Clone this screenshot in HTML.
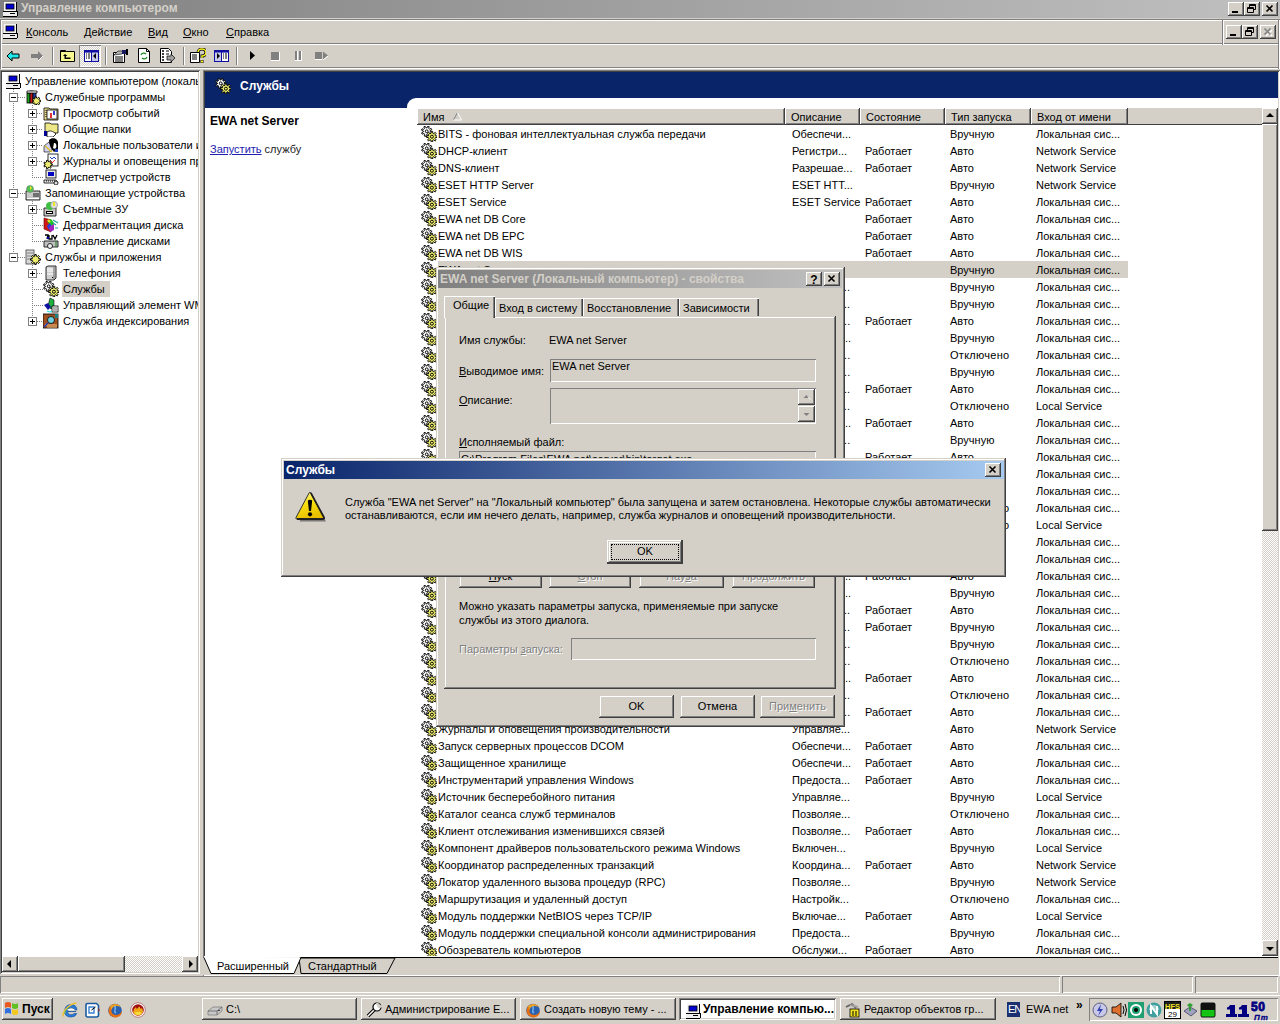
<!DOCTYPE html><html><head><meta charset="utf-8"><title>Управление компьютером</title><style>
*{margin:0;padding:0;box-sizing:border-box}
html,body{width:1280px;height:1024px;overflow:hidden;background:#d4d0c8;font-family:"Liberation Sans",sans-serif;font-size:11px;color:#000}
div,svg{position:absolute}
.t{white-space:nowrap;line-height:13px;height:13px}
.b{font-weight:bold;font-size:12px}
.raised{background:#d4d0c8;box-shadow:inset -1px -1px #404040,inset 1px 1px #fff,inset -2px -2px #808080,inset 2px 2px #d4d0c8}
.raisedo{background:#d4d0c8;box-shadow:inset -1px -1px #404040,inset 1px 1px #d4d0c8,inset -2px -2px #808080,inset 2px 2px #fff}
.sunk{box-shadow:inset 1px 1px #808080,inset -1px -1px #fff,inset 2px 2px #404040,inset -2px -2px #d4d0c8}
.etch{box-shadow:inset 1px 1px #808080,inset -1px -1px #fff}
.thin{box-shadow:inset 1px 1px #808080,inset -1px -1px #fff}
.thinr{box-shadow:inset 1px 1px #fff,inset -1px -1px #808080}
.u{text-decoration:underline}
.dis{color:#808080;text-shadow:1px 1px #fff}
.chk{background-color:#fff;background-image:linear-gradient(45deg,#d4d0c8 25%,transparent 25%,transparent 75%,#d4d0c8 75%),linear-gradient(45deg,#d4d0c8 25%,transparent 25%,transparent 75%,#d4d0c8 75%);background-size:2px 2px;background-position:0 0,1px 1px}
</style></head><body>
<div style="left:0px;top:0px;width:1280px;height:18px;background:linear-gradient(90deg,#808080,#c0c0c0)"></div>
<svg style="left:2px;top:1px" width="16" height="16" viewBox="0 0 16 16" ><rect x="2" y="1" width="12" height="9" fill="#f4f4f4"/><rect x="4" y="3" width="8" height="5" fill="#0000d0" stroke="#000" stroke-width="0.8"/><rect x="14" y="1" width="1" height="9" fill="#000"/><rect x="1" y="10" width="14" height="1" fill="#000"/><rect x="1" y="11" width="14" height="4" fill="#eee"/><rect x="1" y="15" width="14" height="1" fill="#000"/><rect x="15" y="10" width="1" height="5" fill="#000"/><rect x="8" y="12" width="5" height="1" fill="#000"/></svg>
<div class="t b" style="left:21px;top:2px;color:#d4d0c8">Управление компьютером</div>
<div class="raised" style="left:1228px;top:2px;width:16px;height:14px;"></div>
<svg style="left:1228px;top:2px" width="16" height="14" viewBox="0 0 16 14" ><rect x="4" y="9" width="6" height="2" fill="#000"/></svg>
<div class="raised" style="left:1244px;top:2px;width:16px;height:14px;"></div>
<svg style="left:1244px;top:2px" width="16" height="14" viewBox="0 0 16 14" ><path d="M5.5 2.5h6v5h-6z M5.5 3.5h6" fill="none" stroke="#000"/><path d="M3.5 5.5h6v5h-6z" fill="#d4d0c8" stroke="#000"/><path d="M3.5 6.5h6" stroke="#000"/></svg>
<div class="raised" style="left:1262px;top:2px;width:16px;height:14px;"></div>
<svg style="left:1262px;top:2px" width="16" height="14" viewBox="0 0 16 14" ><path d="M4.5 3.5l6 6M10.5 3.5l-6 6" stroke="#000" stroke-width="1.6"/></svg>
<div style="left:0px;top:19px;width:1280px;height:1px;background:#808080"></div>
<div style="left:0px;top:20px;width:1280px;height:1px;background:#fff"></div>
<div style="left:0px;top:43px;width:1280px;height:1px;background:#808080"></div>
<div style="left:0px;top:44px;width:1280px;height:1px;background:#fff"></div>
<div style="left:0px;top:67px;width:1280px;height:1px;background:#808080"></div>
<div style="left:0px;top:68px;width:1280px;height:1px;background:#fff"></div>
<div style="left:0px;top:19px;width:1px;height:50px;background:#808080"></div>
<div style="left:1px;top:20px;width:1px;height:48px;background:#fff"></div>
<div style="left:1278px;top:19px;width:1px;height:50px;background:#808080"></div>
<div style="left:1279px;top:20px;width:1px;height:48px;background:#fff"></div>
<div style="left:1222px;top:19px;width:1px;height:26px;background:#808080"></div>
<div style="left:1223px;top:20px;width:1px;height:24px;background:#fff"></div>
<svg style="left:2px;top:23px" width="16" height="16" viewBox="0 0 16 16" ><rect x="2" y="1" width="12" height="9" fill="#f4f4f4"/><rect x="4" y="3" width="8" height="5" fill="#0000d0" stroke="#000" stroke-width="0.8"/><rect x="14" y="1" width="1" height="9" fill="#000"/><rect x="1" y="10" width="14" height="1" fill="#000"/><rect x="1" y="11" width="14" height="4" fill="#eee"/><rect x="1" y="15" width="14" height="1" fill="#000"/><rect x="15" y="10" width="1" height="5" fill="#000"/><rect x="8" y="12" width="5" height="1" fill="#000"/></svg>
<div class="t" style="left:26px;top:26px;"><span class="u">К</span>онсоль</div>
<div class="t" style="left:84px;top:26px;"><span class="u">Д</span>ействие</div>
<div class="t" style="left:148px;top:26px;"><span class="u">В</span>ид</div>
<div class="t" style="left:183px;top:26px;"><span class="u">О</span>кно</div>
<div class="t" style="left:226px;top:26px;"><span class="u">С</span>правка</div>
<div class="raised" style="left:1226px;top:25px;width:16px;height:14px;"></div>
<svg style="left:1226px;top:25px" width="16" height="14" viewBox="0 0 16 14" ><rect x="4" y="9" width="6" height="2" fill="#000"/></svg>
<div class="raised" style="left:1242px;top:25px;width:16px;height:14px;"></div>
<svg style="left:1242px;top:25px" width="16" height="14" viewBox="0 0 16 14" ><path d="M5.5 2.5h6v5h-6z M5.5 3.5h6" fill="none" stroke="#000"/><path d="M3.5 5.5h6v5h-6z" fill="#d4d0c8" stroke="#000"/><path d="M3.5 6.5h6" stroke="#000"/></svg>
<div class="raised" style="left:1260px;top:25px;width:16px;height:14px;"></div>
<svg style="left:1260px;top:25px" width="16" height="14" viewBox="0 0 16 14" ><path d="M5 4l6 6M11 4l-6 6" stroke="#fff" stroke-width="1.5" transform="translate(1,1)"/><path d="M4.5 3.5l6 6M10.5 3.5l-6 6" stroke="#808080" stroke-width="1.6"/></svg>
<div class="thin chk" style="left:79px;top:45px;width:22px;height:22px;"></div>
<div style="left:52px;top:47px;width:2px;height:18px;box-shadow:inset 1px 0 #808080,inset -1px 0 #fff"></div>
<div style="left:105px;top:47px;width:2px;height:18px;box-shadow:inset 1px 0 #808080,inset -1px 0 #fff"></div>
<div style="left:183px;top:47px;width:2px;height:18px;box-shadow:inset 1px 0 #808080,inset -1px 0 #fff"></div>
<div style="left:236px;top:47px;width:2px;height:18px;box-shadow:inset 1px 0 #808080,inset -1px 0 #fff"></div>
<svg style="left:6px;top:50px" width="14" height="12" viewBox="0 0 14 12" ><path d="M1 6l5-5v3h7v4h-7v3z" fill="#20e8e8" stroke="#000" stroke-width="1"/></svg>
<svg style="left:30px;top:50px" width="14" height="12" viewBox="0 0 14 12" ><path d="M13 6l-5-5v3h-7v4h7v3z" fill="#808080"/><path d="M8 11l5-5" stroke="#fff"/></svg>
<svg style="left:60px;top:48px" width="16" height="16" viewBox="0 0 16 16" ><path d="M0.5 2.5h5l1 1h8v10h-14z" fill="#f8f890" stroke="#000" stroke-width="1"/><path d="M0.5 3.5h6" stroke="#000"/><path d="M5 6l-2 2h1.5v3h6v-1.5h-4.5v-1.5h1.5z" fill="#000"/></svg>
<svg style="left:84px;top:50px" width="15" height="12" viewBox="0 0 15 12" ><rect x="0.5" y="0.5" width="14" height="11" fill="#c8c8e8" stroke="#1010a0" stroke-width="1"/><rect x="1" y="1" width="13" height="1.5" fill="#1010a0"/><rect x="7" y="1" width="1" height="10" fill="#1010a0"/><rect x="1" y="3" width="6" height="8" fill="#fff"/><path d="M2 4h1M2 6h1M2 8h1M4 4h2M4 6h2M4 8h2" stroke="#000"/><path d="M12 3v6l-3-3z" fill="#000"/></svg>
<svg style="left:113px;top:48px" width="16" height="16" viewBox="0 0 16 16" ><path d="M0.5 4.5h11v10h-11z" fill="#fff" stroke="#000"/><path d="M2 9h8M2 11h8M2 13h8" stroke="#000"/><path d="M1 7l4-4h6l-2 3z" fill="#b0b0b0" stroke="#000" stroke-width=".6"/><path d="M9 2h5v4h-5z" fill="#1a1a60"/><rect x="13" y="1" width="2" height="6" fill="#000"/></svg>
<svg style="left:138px;top:48px" width="12" height="16" viewBox="0 0 12 16" ><path d="M0.5 0.5h8l3 3v11h-11z" fill="#fff" stroke="#000"/><path d="M8.5 0.5v3h3" fill="none" stroke="#000"/><path d="M3 7a3 3 0 0 1 5-1M9 9a3 3 0 0 1-5 1" stroke="#209020" stroke-width="1.2" fill="none"/></svg>
<svg style="left:160px;top:48px" width="16" height="16" viewBox="0 0 16 16" ><path d="M0.5 0.5h8l3 3v11h-11z" fill="#fff" stroke="#000"/><path d="M2 3h2M2 6h2M2 9h2M2 12h2" stroke="#000" stroke-width="1.5"/><path d="M6 3h3M6 6h3" stroke="#000"/><path d="M7 8h4v-2l4 4-4 4v-2h-4z" fill="#a0a0a0" stroke="#000" stroke-width=".7"/></svg>
<svg style="left:190px;top:48px" width="16" height="16" viewBox="0 0 16 16" ><path d="M0.5 4.5h9v10h-9z" fill="#fff" stroke="#000"/><path d="M2 7h5M2 9h5M2 11h5" stroke="#000"/><path d="M8 4a4 3.5 0 1 1 4 4v2" fill="none" stroke="#000" stroke-width="3"/><path d="M8 4a4 3.5 0 1 1 4 4v2" fill="none" stroke="#f8f820" stroke-width="1.5"/><rect x="10.5" y="12" width="3" height="3" fill="#000"/><rect x="11" y="12.5" width="2" height="2" fill="#f8f820"/></svg>
<svg style="left:214px;top:50px" width="15" height="12" viewBox="0 0 15 12" ><rect x="0.5" y="0.5" width="14" height="11" fill="#c8c8e8" stroke="#1010a0" stroke-width="1"/><rect x="1" y="1" width="13" height="1.5" fill="#1010a0"/><rect x="7" y="1" width="1" height="10" fill="#1010a0"/><rect x="8" y="3" width="6" height="8" fill="#fff"/><path d="M9 4h1M9 6h1M9 8h1M11 4h2M11 6h2M11 8h2" stroke="#000"/><path d="M3 3v6l3-3z" fill="#000"/></svg>
<svg style="left:249px;top:50px" width="8" height="12" viewBox="0 0 8 12" ><path d="M1 1v9l5-4.5z" fill="#000"/></svg>
<svg style="left:270px;top:51px" width="11" height="11" viewBox="0 0 11 11" ><rect x="1" y="1" width="8" height="8" fill="#808080"/><path d="M9.5 1v8.5h-8.5" stroke="#fff" fill="none"/></svg>
<svg style="left:294px;top:50px" width="9" height="12" viewBox="0 0 9 12" ><rect x="1" y="1" width="2" height="9" fill="#808080"/><rect x="5" y="1" width="2" height="9" fill="#808080"/><path d="M3.5 1v9.5M7.5 1v9.5h-6.5" stroke="#fff" fill="none"/></svg>
<svg style="left:314px;top:50px" width="16" height="12" viewBox="0 0 16 12" ><rect x="1" y="2" width="7" height="7" fill="#808080"/><path d="M9 1.5l5 4-5 4z" fill="#808080"/><path d="M8 9.5h-7M9 10l5-4" stroke="#fff" fill="none"/></svg>
<div class="sunk" style="left:0px;top:70px;width:200px;height:904px;background:#fff"></div>
<div style="left:2px;top:72px;width:196px;height:884px;overflow:hidden">
<div style="left:11px;top:17px;width:1px;height:168px;background:repeating-linear-gradient(180deg,#808080 0 1px,transparent 1px 2px)"></div>
<div style="left:30px;top:33px;width:1px;height:72px;background:repeating-linear-gradient(180deg,#808080 0 1px,transparent 1px 2px)"></div>
<div style="left:30px;top:129px;width:1px;height:40px;background:repeating-linear-gradient(180deg,#808080 0 1px,transparent 1px 2px)"></div>
<div style="left:30px;top:193px;width:1px;height:56px;background:repeating-linear-gradient(180deg,#808080 0 1px,transparent 1px 2px)"></div>
<div style="left:16px;top:25px;width:7px;height:1px;background:repeating-linear-gradient(90deg,#808080 0 1px,transparent 1px 2px)"></div>
<div style="left:35px;top:41px;width:6px;height:1px;background:repeating-linear-gradient(90deg,#808080 0 1px,transparent 1px 2px)"></div>
<div style="left:35px;top:57px;width:6px;height:1px;background:repeating-linear-gradient(90deg,#808080 0 1px,transparent 1px 2px)"></div>
<div style="left:35px;top:73px;width:6px;height:1px;background:repeating-linear-gradient(90deg,#808080 0 1px,transparent 1px 2px)"></div>
<div style="left:35px;top:89px;width:6px;height:1px;background:repeating-linear-gradient(90deg,#808080 0 1px,transparent 1px 2px)"></div>
<div style="left:30px;top:105px;width:11px;height:1px;background:repeating-linear-gradient(90deg,#808080 0 1px,transparent 1px 2px)"></div>
<div style="left:16px;top:121px;width:7px;height:1px;background:repeating-linear-gradient(90deg,#808080 0 1px,transparent 1px 2px)"></div>
<div style="left:35px;top:137px;width:6px;height:1px;background:repeating-linear-gradient(90deg,#808080 0 1px,transparent 1px 2px)"></div>
<div style="left:30px;top:153px;width:11px;height:1px;background:repeating-linear-gradient(90deg,#808080 0 1px,transparent 1px 2px)"></div>
<div style="left:30px;top:169px;width:11px;height:1px;background:repeating-linear-gradient(90deg,#808080 0 1px,transparent 1px 2px)"></div>
<div style="left:16px;top:185px;width:7px;height:1px;background:repeating-linear-gradient(90deg,#808080 0 1px,transparent 1px 2px)"></div>
<div style="left:35px;top:201px;width:6px;height:1px;background:repeating-linear-gradient(90deg,#808080 0 1px,transparent 1px 2px)"></div>
<div style="left:30px;top:217px;width:11px;height:1px;background:repeating-linear-gradient(90deg,#808080 0 1px,transparent 1px 2px)"></div>
<div style="left:30px;top:233px;width:11px;height:1px;background:repeating-linear-gradient(90deg,#808080 0 1px,transparent 1px 2px)"></div>
<div style="left:35px;top:249px;width:6px;height:1px;background:repeating-linear-gradient(90deg,#808080 0 1px,transparent 1px 2px)"></div>
<svg style="left:3px;top:1px" width="16" height="16" viewBox="0 0 16 16" ><rect x="2" y="1" width="12" height="9" fill="#f4f4f4"/><rect x="4" y="3" width="8" height="5" fill="#0000d0" stroke="#000" stroke-width="0.8"/><rect x="14" y="1" width="1" height="9" fill="#000"/><rect x="1" y="10" width="14" height="1" fill="#000"/><rect x="1" y="11" width="14" height="4" fill="#eee"/><rect x="1" y="15" width="14" height="1" fill="#000"/><rect x="15" y="10" width="1" height="5" fill="#000"/><rect x="8" y="12" width="5" height="1" fill="#000"/></svg>
<div class="t" style="left:23px;top:3px;">Управление компьютером (локальным)</div>
<svg style="left:23px;top:17px" width="16" height="16" viewBox="0 0 16 16" ><rect x="2" y="4" width="3" height="10" fill="#20a020" stroke="#000" stroke-width=".8"/><rect x="5" y="2" width="3" height="12" fill="#c01818" stroke="#000" stroke-width=".8"/><rect x="8" y="3" width="3" height="8" fill="#2040a0" stroke="#000" stroke-width=".8"/><path d="M2 2h10v2h-10z" fill="#fff" stroke="#000" stroke-width=".8"/><path d="M14.39 11.20 L15.74 11.31 L15.74 12.69 L14.39 12.80 L13.93 13.76 L14.69 14.89 L13.61 15.75 L12.68 14.76 L11.63 15.00 L11.23 16.29 L9.88 15.98 L10.08 14.64 L9.24 13.97 L7.98 14.46 L7.38 13.22 L8.55 12.54 L8.55 11.46 L7.38 10.78 L7.98 9.54 L9.24 10.03 L10.08 9.36 L9.88 8.02 L11.23 7.71 L11.63 9.00 L12.68 9.24 L13.61 8.25 L14.69 9.11 L13.93 10.24Z" fill="#ecec70" stroke="#000" stroke-width="1"/></svg>
<div class="t" style="left:43px;top:19px;">Служебные программы</div>
<div style="left:7px;top:21px;width:9px;height:9px;background:#fff;border:1px solid #808080"></div>
<div style="left:9px;top:25px;width:5px;height:1px;background:#000"></div>
<svg style="left:41px;top:33px" width="16" height="16" viewBox="0 0 16 16" ><path d="M1 3h5l1 1h8v11h-14z" fill="#f0e090" stroke="#000" stroke-width=".8"/><rect x="4" y="5" width="10" height="9" fill="#fff" stroke="#000" stroke-width=".8"/><rect x="7" y="8" width="2" height="5" fill="#e03030"/><rect x="10" y="6" width="2" height="4" fill="#3040c0"/><path d="M3 5v8" stroke="#000" stroke-dasharray="1 1"/></svg>
<div class="t" style="left:61px;top:35px;">Просмотр событий</div>
<div style="left:26px;top:37px;width:9px;height:9px;background:#fff;border:1px solid #808080"></div>
<div style="left:28px;top:41px;width:5px;height:1px;background:#000"></div>
<div style="left:30px;top:39px;width:1px;height:5px;background:#000"></div>
<svg style="left:41px;top:49px" width="16" height="16" viewBox="0 0 16 16" ><path d="M2 2h5l1 1h7v9h-13z" fill="#ece888" stroke="#000" stroke-width=".8"/><rect x="1" y="10" width="3" height="5" fill="#0000a0"/><path d="M4 11c3-2 6-1 9 2l-3 3h-6z" fill="#fff" stroke="#000" stroke-width=".8"/></svg>
<div class="t" style="left:61px;top:51px;">Общие папки</div>
<div style="left:26px;top:53px;width:9px;height:9px;background:#fff;border:1px solid #808080"></div>
<div style="left:28px;top:57px;width:5px;height:1px;background:#000"></div>
<div style="left:30px;top:55px;width:1px;height:5px;background:#000"></div>
<svg style="left:41px;top:65px" width="16" height="16" viewBox="0 0 16 16" ><path d="M1 15v-6l5-4 4 6-3 4z" fill="#d0d0f0" stroke="#000" stroke-width=".6"/><path d="M6 3c3-3 9-2 9 3v6l-4 3c-3-3-5-7-5-12z" fill="#000"/><path d="M11 6c2 0 3 2 2 5-1 1-2 1-3 0z" fill="#fff"/><path d="M2 9l7 6" stroke="#e0c020" stroke-width="1.5"/><rect x="12" y="12" width="3" height="3" fill="#2040c0"/></svg>
<div class="t" style="left:61px;top:67px;">Локальные пользователи и группы</div>
<div style="left:26px;top:69px;width:9px;height:9px;background:#fff;border:1px solid #808080"></div>
<div style="left:28px;top:73px;width:5px;height:1px;background:#000"></div>
<div style="left:30px;top:71px;width:1px;height:5px;background:#000"></div>
<svg style="left:41px;top:81px" width="16" height="16" viewBox="0 0 16 16" ><rect x="5" y="1" width="10" height="12" fill="#fff" stroke="#000" stroke-width=".8"/><path d="M7 4l2 2 2-2 2 2" stroke="#2040c0" fill="none"/><path d="M7 7l2 3 3-3" stroke="#e03030" fill="none"/><path d="M7.89 10.70 L9.24 10.81 L9.24 12.19 L7.89 12.30 L7.43 13.26 L8.19 14.39 L7.11 15.25 L6.18 14.26 L5.13 14.50 L4.73 15.79 L3.38 15.48 L3.58 14.14 L2.74 13.47 L1.48 13.96 L0.88 12.72 L2.05 12.04 L2.05 10.96 L0.88 10.28 L1.48 9.04 L2.74 9.53 L3.58 8.86 L3.38 7.52 L4.73 7.21 L5.13 8.50 L6.18 8.74 L7.11 7.75 L8.19 8.61 L7.43 9.74Z" fill="#ecec70" stroke="#000" stroke-width="1"/></svg>
<div class="t" style="left:61px;top:83px;">Журналы и оповещения производительности</div>
<div style="left:26px;top:85px;width:9px;height:9px;background:#fff;border:1px solid #808080"></div>
<div style="left:28px;top:89px;width:5px;height:1px;background:#000"></div>
<div style="left:30px;top:87px;width:1px;height:5px;background:#000"></div>
<svg style="left:41px;top:97px" width="16" height="16" viewBox="0 0 16 16" ><rect x="3" y="1" width="10" height="8" fill="#e8e8e8" stroke="#000" stroke-width=".8"/><rect x="5" y="3" width="6" height="4" fill="#0000c0"/><path d="M1 11h12l2 3h-14z" fill="#e8e8e8" stroke="#000" stroke-width=".8"/><path d="M3 12h9" stroke="#000" stroke-dasharray="1 1"/><circle cx="13" cy="14" r="2" fill="#ddd" stroke="#000" stroke-width=".8"/></svg>
<div class="t" style="left:61px;top:99px;">Диспетчер устройств</div>
<svg style="left:23px;top:113px" width="16" height="16" viewBox="0 0 16 16" ><path d="M1 6h14v9h-14z" fill="#c8c8c8" stroke="#000" stroke-width=".8"/><rect x="8" y="8" width="6" height="4" fill="#707070"/><rect x="2" y="13" width="12" height="1" fill="#fff"/><circle cx="5" cy="4" r="3.5" fill="#50c050" stroke="#808080" stroke-width=".6"/><path d="M5 1l2 2-2 2z" fill="#f0f020"/></svg>
<div class="t" style="left:43px;top:115px;">Запоминающие устройства</div>
<div style="left:7px;top:117px;width:9px;height:9px;background:#fff;border:1px solid #808080"></div>
<div style="left:9px;top:121px;width:5px;height:1px;background:#000"></div>
<svg style="left:41px;top:129px" width="16" height="16" viewBox="0 0 16 16" ><path d="M1 7h12v8h-12z" fill="#c8c8c8" stroke="#000" stroke-width=".8"/><rect x="3" y="10" width="7" height="3" fill="#000"/><rect x="4" y="11" width="5" height="1" fill="#fff"/><circle cx="7" cy="5" r="4" fill="#40c040"/><circle cx="11" cy="4" r="3.5" fill="#e0e0e0" stroke="#808080" stroke-width=".6"/><path d="M10 1h2v4h-2z" fill="#e8e820"/></svg>
<div class="t" style="left:61px;top:131px;">Съемные ЗУ</div>
<div style="left:26px;top:133px;width:9px;height:9px;background:#fff;border:1px solid #808080"></div>
<div style="left:28px;top:137px;width:5px;height:1px;background:#000"></div>
<div style="left:30px;top:135px;width:1px;height:5px;background:#000"></div>
<svg style="left:41px;top:145px" width="16" height="16" viewBox="0 0 16 16" ><path d="M1 1l7 2v12l-7-3z" fill="#d01818" stroke="#600" stroke-width=".6"/><path d="M4 4l4-2 3 4-2 5z" fill="#20c020"/><path d="M4 9l3-3 2 4-3 3z" fill="#2040e0"/><path d="M6 10l5-3v6l-4 2z" fill="#a020c0"/><path d="M10 3l5 3M10 6l3 2M12 11h3" stroke="#20a0a0" stroke-width="1.2"/><path d="M5 3l2 2" stroke="#f0e020" stroke-width="2"/></svg>
<div class="t" style="left:61px;top:147px;">Дефрагментация диска</div>
<svg style="left:41px;top:161px" width="16" height="16" viewBox="0 0 16 16" ><path d="M1 8h14v6h-14z" fill="#c0c0c0" stroke="#000" stroke-width=".8"/><path d="M2 2h3l-1 4M6 2v4h3v-4M10 2l2 4 2-4" stroke="#000" stroke-width="1.3" fill="none"/><path d="M4 5h2" stroke="#0000a0" stroke-width="2"/><circle cx="7" cy="13" r="2.5" fill="#eee" stroke="#000" stroke-width=".8"/><path d="M13 8v6" stroke="#208020"/></svg>
<div class="t" style="left:61px;top:163px;">Управление дисками</div>
<svg style="left:23px;top:177px" width="16" height="16" viewBox="0 0 16 16" ><rect x="1" y="1" width="8" height="14" fill="#d8d8d8" stroke="#404040" stroke-width=".8"/><path d="M2 4h6M2 7h6M2 10h6" stroke="#808080"/><path d="M13.81 9.71 L15.45 9.80 L15.45 11.20 L13.81 11.29 L13.40 12.28 L14.50 13.50 L13.50 14.50 L12.28 13.40 L11.29 13.81 L11.20 15.45 L9.80 15.45 L9.71 13.81 L8.72 13.40 L7.50 14.50 L6.50 13.50 L7.60 12.28 L7.19 11.29 L5.55 11.20 L5.55 9.80 L7.19 9.71 L7.60 8.72 L6.50 7.50 L7.50 6.50 L8.72 7.60 L9.71 7.19 L9.80 5.55 L11.20 5.55 L11.29 7.19 L12.28 7.60 L13.50 6.50 L14.50 7.50 L13.40 8.72Z" fill="#ecec70" stroke="#000" stroke-width="1"/></svg>
<div class="t" style="left:43px;top:179px;">Службы и приложения</div>
<div style="left:7px;top:181px;width:9px;height:9px;background:#fff;border:1px solid #808080"></div>
<div style="left:9px;top:185px;width:5px;height:1px;background:#000"></div>
<svg style="left:41px;top:193px" width="16" height="16" viewBox="0 0 16 16" ><path d="M3 2l2-1h8v12l-2 2h-8z" fill="#d0d0d0" stroke="#000" stroke-width=".8"/><path d="M4 4h8M4 6h8M4 9h8" stroke="#fff" stroke-width="1"/><path d="M11 2v12" stroke="#606060"/><rect x="9" y="12" width="1" height="1" fill="#000"/></svg>
<div class="t" style="left:61px;top:195px;">Телефония</div>
<div style="left:26px;top:197px;width:9px;height:9px;background:#fff;border:1px solid #808080"></div>
<div style="left:28px;top:201px;width:5px;height:1px;background:#000"></div>
<div style="left:30px;top:199px;width:1px;height:5px;background:#000"></div>
<div style="left:60px;top:209px;width:48px;height:16px;background:#d4d0c8"></div>
<svg style="left:41px;top:209px" width="16" height="16" viewBox="0 0 16 16" ><path d="M9.18 5.70 L10.89 6.40 L10.37 7.80 L8.62 7.23 L7.88 8.04 L8.59 9.74 L7.24 10.37 L6.39 8.73 L5.30 8.78 L4.60 10.49 L3.20 9.97 L3.77 8.22 L2.96 7.48 L1.26 8.19 L0.63 6.84 L2.27 5.99 L2.22 4.90 L0.51 4.20 L1.03 2.80 L2.78 3.37 L3.52 2.56 L2.81 0.86 L4.16 0.23 L5.01 1.87 L6.10 1.82 L6.80 0.11 L8.20 0.63 L7.63 2.38 L8.44 3.12 L10.14 2.41 L10.77 3.76 L9.13 4.61Z" fill="#fff" stroke="#000" stroke-width="0.95" stroke-linejoin="round"/><circle cx="5.7" cy="5.3" r="1.4" fill="#fff" stroke="#000" stroke-width="1"/><path d="M14.40 9.86 L16.25 9.94 L16.25 11.46 L14.40 11.54 L13.97 12.58 L15.22 13.94 L14.14 15.02 L12.78 13.77 L11.74 14.20 L11.66 16.05 L10.14 16.05 L10.06 14.20 L9.02 13.77 L7.66 15.02 L6.58 13.94 L7.83 12.58 L7.40 11.54 L5.55 11.46 L5.55 9.94 L7.40 9.86 L7.83 8.82 L6.58 7.46 L7.66 6.38 L9.02 7.63 L10.06 7.20 L10.14 5.35 L11.66 5.35 L11.74 7.20 L12.78 7.63 L14.14 6.38 L15.22 7.46 L13.97 8.82Z" fill="#f0f070" stroke="#000" stroke-width="0.95" stroke-linejoin="round"/><circle cx="10.9" cy="10.7" r="1.5" fill="#f0f070" stroke="#000" stroke-width="1"/></svg>
<div class="t" style="left:61px;top:211px;">Службы</div>
<svg style="left:41px;top:225px" width="16" height="16" viewBox="0 0 16 16" ><path d="M7 1l4 2v7l-3 2-3-3z" fill="#20b040" stroke="#000" stroke-width=".6"/><path d="M1 8l4-2 3 4-3 3z" fill="#1010a0"/><rect x="9" y="9" width="6" height="6" fill="#fff" stroke="#000" stroke-width=".8"/><path d="M10 11h4M10 13h4" stroke="#000" stroke-width=".6"/><path d="M4 14c2 1 4 1 5 0" stroke="#40e0e0" stroke-width="1.2" fill="none"/></svg>
<div class="t" style="left:61px;top:227px;">Управляющий элемент WMI</div>
<svg style="left:41px;top:241px" width="16" height="16" viewBox="0 0 16 16" ><rect x="0" y="1" width="15" height="14" fill="#a05020" stroke="#000" stroke-width=".8"/><rect x="12" y="1" width="3" height="4" fill="#208080"/><path d="M2 12h12M4 14h10" stroke="#f0c080" stroke-width="1"/><circle cx="8" cy="7" r="3.5" fill="#70d0e0" stroke="#000" stroke-width=".8"/><path d="M5 10l-4 4" stroke="#2040c0" stroke-width="1.5"/></svg>
<div class="t" style="left:61px;top:243px;">Служба индексирования</div>
<div style="left:26px;top:245px;width:9px;height:9px;background:#fff;border:1px solid #808080"></div>
<div style="left:28px;top:249px;width:5px;height:1px;background:#000"></div>
<div style="left:30px;top:247px;width:1px;height:5px;background:#000"></div>
</div>
<div class="chk" style="left:2px;top:956px;width:196px;height:16px;"></div>
<div class="raised" style="left:2px;top:956px;width:16px;height:16px;"></div>
<svg style="left:2px;top:956px" width="16" height="16" viewBox="0 0 16 16" ><path d="M5 8l4-4v8z" fill="#000"/></svg>
<div class="raised" style="left:18px;top:956px;width:107px;height:16px;"></div>
<div class="raised" style="left:182px;top:956px;width:16px;height:16px;"></div>
<svg style="left:182px;top:956px" width="16" height="16" viewBox="0 0 16 16" ><path d="M11 8l-4-4v8z" fill="#000"/></svg>
<div class="sunk" style="left:203px;top:70px;width:1077px;height:906px;background:#fff"></div>
<div style="left:205px;top:72px;width:1073px;height:36px;background:#0a246a"></div>
<svg style="left:215px;top:78px" width="16" height="16" viewBox="0 0 16 16" ><path d="M9.18 5.70 L10.89 6.40 L10.37 7.80 L8.62 7.23 L7.88 8.04 L8.59 9.74 L7.24 10.37 L6.39 8.73 L5.30 8.78 L4.60 10.49 L3.20 9.97 L3.77 8.22 L2.96 7.48 L1.26 8.19 L0.63 6.84 L2.27 5.99 L2.22 4.90 L0.51 4.20 L1.03 2.80 L2.78 3.37 L3.52 2.56 L2.81 0.86 L4.16 0.23 L5.01 1.87 L6.10 1.82 L6.80 0.11 L8.20 0.63 L7.63 2.38 L8.44 3.12 L10.14 2.41 L10.77 3.76 L9.13 4.61Z" fill="#fff" stroke="#000" stroke-width="0.95" stroke-linejoin="round"/><circle cx="5.7" cy="5.3" r="1.4" fill="#fff" stroke="#000" stroke-width="1"/><path d="M14.40 9.86 L16.25 9.94 L16.25 11.46 L14.40 11.54 L13.97 12.58 L15.22 13.94 L14.14 15.02 L12.78 13.77 L11.74 14.20 L11.66 16.05 L10.14 16.05 L10.06 14.20 L9.02 13.77 L7.66 15.02 L6.58 13.94 L7.83 12.58 L7.40 11.54 L5.55 11.46 L5.55 9.94 L7.40 9.86 L7.83 8.82 L6.58 7.46 L7.66 6.38 L9.02 7.63 L10.06 7.20 L10.14 5.35 L11.66 5.35 L11.74 7.20 L12.78 7.63 L14.14 6.38 L15.22 7.46 L13.97 8.82Z" fill="#f0f070" stroke="#000" stroke-width="0.95" stroke-linejoin="round"/><circle cx="10.9" cy="10.7" r="1.5" fill="#f0f070" stroke="#000" stroke-width="1"/></svg>
<div class="t b" style="left:240px;top:80px;color:#fff">Службы</div>
<div style="left:407px;top:98px;width:871px;height:10px;background:#fff;border-top-left-radius:9px"></div>
<div class="t b" style="left:210px;top:115px;">EWA net Server</div>
<div class="t" style="left:210px;top:143px;"><span class="u" style="color:#2020b0">Запустить</span> <span style="color:#222">службу</span></div>
<div style="left:417px;top:108px;width:845px;height:17px;background:#d4d0c8;box-shadow:inset 0 -1px #404040"></div>
<div class="raised" style="left:417px;top:108px;width:368px;height:17px;"></div>
<div class="t" style="left:423px;top:111px;">Имя</div>
<div class="raised" style="left:785px;top:108px;width:75px;height:17px;"></div>
<div class="t" style="left:791px;top:111px;">Описание</div>
<div class="raised" style="left:860px;top:108px;width:85px;height:17px;"></div>
<div class="t" style="left:866px;top:111px;">Состояние</div>
<div class="raised" style="left:945px;top:108px;width:86px;height:17px;"></div>
<div class="t" style="left:951px;top:111px;">Тип запуска</div>
<div class="raised" style="left:1031px;top:108px;width:97px;height:17px;"></div>
<div class="t" style="left:1037px;top:111px;">Вход от имени</div>
<svg style="left:453px;top:112px" width="10" height="10" viewBox="0 0 10 10" ><path d="M4.5 0.5L0.5 8" stroke="#808080"/><path d="M4.5 0.5L8.5 8H0.5" stroke="#fff" fill="none"/></svg>
<div style="left:417px;top:125px;width:845px;height:832px;overflow:hidden">
<svg style="left:4px;top:1px" width="16" height="16" viewBox="0 0 16 16" ><path d="M9.18 5.70 L10.89 6.40 L10.37 7.80 L8.62 7.23 L7.88 8.04 L8.59 9.74 L7.24 10.37 L6.39 8.73 L5.30 8.78 L4.60 10.49 L3.20 9.97 L3.77 8.22 L2.96 7.48 L1.26 8.19 L0.63 6.84 L2.27 5.99 L2.22 4.90 L0.51 4.20 L1.03 2.80 L2.78 3.37 L3.52 2.56 L2.81 0.86 L4.16 0.23 L5.01 1.87 L6.10 1.82 L6.80 0.11 L8.20 0.63 L7.63 2.38 L8.44 3.12 L10.14 2.41 L10.77 3.76 L9.13 4.61Z" fill="#fff" stroke="#000" stroke-width="0.95" stroke-linejoin="round"/><circle cx="5.7" cy="5.3" r="1.4" fill="#fff" stroke="#000" stroke-width="1"/><path d="M14.40 9.86 L16.25 9.94 L16.25 11.46 L14.40 11.54 L13.97 12.58 L15.22 13.94 L14.14 15.02 L12.78 13.77 L11.74 14.20 L11.66 16.05 L10.14 16.05 L10.06 14.20 L9.02 13.77 L7.66 15.02 L6.58 13.94 L7.83 12.58 L7.40 11.54 L5.55 11.46 L5.55 9.94 L7.40 9.86 L7.83 8.82 L6.58 7.46 L7.66 6.38 L9.02 7.63 L10.06 7.20 L10.14 5.35 L11.66 5.35 L11.74 7.20 L12.78 7.63 L14.14 6.38 L15.22 7.46 L13.97 8.82Z" fill="#f0f070" stroke="#000" stroke-width="0.95" stroke-linejoin="round"/><circle cx="10.9" cy="10.7" r="1.5" fill="#f0f070" stroke="#000" stroke-width="1"/></svg>
<div class="t" style="left:21px;top:3px;">BITS - фоновая интеллектуальная служба передачи</div>
<div class="t" style="left:375px;top:3px;">Обеспечи...</div>
<div class="t" style="left:448px;top:3px;"></div>
<div class="t" style="left:533px;top:3px;">Вручную</div>
<div class="t" style="left:619px;top:3px;">Локальная сис...</div>
<svg style="left:4px;top:18px" width="16" height="16" viewBox="0 0 16 16" ><path d="M9.18 5.70 L10.89 6.40 L10.37 7.80 L8.62 7.23 L7.88 8.04 L8.59 9.74 L7.24 10.37 L6.39 8.73 L5.30 8.78 L4.60 10.49 L3.20 9.97 L3.77 8.22 L2.96 7.48 L1.26 8.19 L0.63 6.84 L2.27 5.99 L2.22 4.90 L0.51 4.20 L1.03 2.80 L2.78 3.37 L3.52 2.56 L2.81 0.86 L4.16 0.23 L5.01 1.87 L6.10 1.82 L6.80 0.11 L8.20 0.63 L7.63 2.38 L8.44 3.12 L10.14 2.41 L10.77 3.76 L9.13 4.61Z" fill="#fff" stroke="#000" stroke-width="0.95" stroke-linejoin="round"/><circle cx="5.7" cy="5.3" r="1.4" fill="#fff" stroke="#000" stroke-width="1"/><path d="M14.40 9.86 L16.25 9.94 L16.25 11.46 L14.40 11.54 L13.97 12.58 L15.22 13.94 L14.14 15.02 L12.78 13.77 L11.74 14.20 L11.66 16.05 L10.14 16.05 L10.06 14.20 L9.02 13.77 L7.66 15.02 L6.58 13.94 L7.83 12.58 L7.40 11.54 L5.55 11.46 L5.55 9.94 L7.40 9.86 L7.83 8.82 L6.58 7.46 L7.66 6.38 L9.02 7.63 L10.06 7.20 L10.14 5.35 L11.66 5.35 L11.74 7.20 L12.78 7.63 L14.14 6.38 L15.22 7.46 L13.97 8.82Z" fill="#f0f070" stroke="#000" stroke-width="0.95" stroke-linejoin="round"/><circle cx="10.9" cy="10.7" r="1.5" fill="#f0f070" stroke="#000" stroke-width="1"/></svg>
<div class="t" style="left:21px;top:20px;">DHCP-клиент</div>
<div class="t" style="left:375px;top:20px;">Регистри...</div>
<div class="t" style="left:448px;top:20px;">Работает</div>
<div class="t" style="left:533px;top:20px;">Авто</div>
<div class="t" style="left:619px;top:20px;">Network Service</div>
<svg style="left:4px;top:35px" width="16" height="16" viewBox="0 0 16 16" ><path d="M9.18 5.70 L10.89 6.40 L10.37 7.80 L8.62 7.23 L7.88 8.04 L8.59 9.74 L7.24 10.37 L6.39 8.73 L5.30 8.78 L4.60 10.49 L3.20 9.97 L3.77 8.22 L2.96 7.48 L1.26 8.19 L0.63 6.84 L2.27 5.99 L2.22 4.90 L0.51 4.20 L1.03 2.80 L2.78 3.37 L3.52 2.56 L2.81 0.86 L4.16 0.23 L5.01 1.87 L6.10 1.82 L6.80 0.11 L8.20 0.63 L7.63 2.38 L8.44 3.12 L10.14 2.41 L10.77 3.76 L9.13 4.61Z" fill="#fff" stroke="#000" stroke-width="0.95" stroke-linejoin="round"/><circle cx="5.7" cy="5.3" r="1.4" fill="#fff" stroke="#000" stroke-width="1"/><path d="M14.40 9.86 L16.25 9.94 L16.25 11.46 L14.40 11.54 L13.97 12.58 L15.22 13.94 L14.14 15.02 L12.78 13.77 L11.74 14.20 L11.66 16.05 L10.14 16.05 L10.06 14.20 L9.02 13.77 L7.66 15.02 L6.58 13.94 L7.83 12.58 L7.40 11.54 L5.55 11.46 L5.55 9.94 L7.40 9.86 L7.83 8.82 L6.58 7.46 L7.66 6.38 L9.02 7.63 L10.06 7.20 L10.14 5.35 L11.66 5.35 L11.74 7.20 L12.78 7.63 L14.14 6.38 L15.22 7.46 L13.97 8.82Z" fill="#f0f070" stroke="#000" stroke-width="0.95" stroke-linejoin="round"/><circle cx="10.9" cy="10.7" r="1.5" fill="#f0f070" stroke="#000" stroke-width="1"/></svg>
<div class="t" style="left:21px;top:37px;">DNS-клиент</div>
<div class="t" style="left:375px;top:37px;">Разрешае...</div>
<div class="t" style="left:448px;top:37px;">Работает</div>
<div class="t" style="left:533px;top:37px;">Авто</div>
<div class="t" style="left:619px;top:37px;">Network Service</div>
<svg style="left:4px;top:52px" width="16" height="16" viewBox="0 0 16 16" ><path d="M9.18 5.70 L10.89 6.40 L10.37 7.80 L8.62 7.23 L7.88 8.04 L8.59 9.74 L7.24 10.37 L6.39 8.73 L5.30 8.78 L4.60 10.49 L3.20 9.97 L3.77 8.22 L2.96 7.48 L1.26 8.19 L0.63 6.84 L2.27 5.99 L2.22 4.90 L0.51 4.20 L1.03 2.80 L2.78 3.37 L3.52 2.56 L2.81 0.86 L4.16 0.23 L5.01 1.87 L6.10 1.82 L6.80 0.11 L8.20 0.63 L7.63 2.38 L8.44 3.12 L10.14 2.41 L10.77 3.76 L9.13 4.61Z" fill="#fff" stroke="#000" stroke-width="0.95" stroke-linejoin="round"/><circle cx="5.7" cy="5.3" r="1.4" fill="#fff" stroke="#000" stroke-width="1"/><path d="M14.40 9.86 L16.25 9.94 L16.25 11.46 L14.40 11.54 L13.97 12.58 L15.22 13.94 L14.14 15.02 L12.78 13.77 L11.74 14.20 L11.66 16.05 L10.14 16.05 L10.06 14.20 L9.02 13.77 L7.66 15.02 L6.58 13.94 L7.83 12.58 L7.40 11.54 L5.55 11.46 L5.55 9.94 L7.40 9.86 L7.83 8.82 L6.58 7.46 L7.66 6.38 L9.02 7.63 L10.06 7.20 L10.14 5.35 L11.66 5.35 L11.74 7.20 L12.78 7.63 L14.14 6.38 L15.22 7.46 L13.97 8.82Z" fill="#f0f070" stroke="#000" stroke-width="0.95" stroke-linejoin="round"/><circle cx="10.9" cy="10.7" r="1.5" fill="#f0f070" stroke="#000" stroke-width="1"/></svg>
<div class="t" style="left:21px;top:54px;">ESET HTTP Server</div>
<div class="t" style="left:375px;top:54px;">ESET HTT...</div>
<div class="t" style="left:448px;top:54px;"></div>
<div class="t" style="left:533px;top:54px;">Вручную</div>
<div class="t" style="left:619px;top:54px;">Network Service</div>
<svg style="left:4px;top:69px" width="16" height="16" viewBox="0 0 16 16" ><path d="M9.18 5.70 L10.89 6.40 L10.37 7.80 L8.62 7.23 L7.88 8.04 L8.59 9.74 L7.24 10.37 L6.39 8.73 L5.30 8.78 L4.60 10.49 L3.20 9.97 L3.77 8.22 L2.96 7.48 L1.26 8.19 L0.63 6.84 L2.27 5.99 L2.22 4.90 L0.51 4.20 L1.03 2.80 L2.78 3.37 L3.52 2.56 L2.81 0.86 L4.16 0.23 L5.01 1.87 L6.10 1.82 L6.80 0.11 L8.20 0.63 L7.63 2.38 L8.44 3.12 L10.14 2.41 L10.77 3.76 L9.13 4.61Z" fill="#fff" stroke="#000" stroke-width="0.95" stroke-linejoin="round"/><circle cx="5.7" cy="5.3" r="1.4" fill="#fff" stroke="#000" stroke-width="1"/><path d="M14.40 9.86 L16.25 9.94 L16.25 11.46 L14.40 11.54 L13.97 12.58 L15.22 13.94 L14.14 15.02 L12.78 13.77 L11.74 14.20 L11.66 16.05 L10.14 16.05 L10.06 14.20 L9.02 13.77 L7.66 15.02 L6.58 13.94 L7.83 12.58 L7.40 11.54 L5.55 11.46 L5.55 9.94 L7.40 9.86 L7.83 8.82 L6.58 7.46 L7.66 6.38 L9.02 7.63 L10.06 7.20 L10.14 5.35 L11.66 5.35 L11.74 7.20 L12.78 7.63 L14.14 6.38 L15.22 7.46 L13.97 8.82Z" fill="#f0f070" stroke="#000" stroke-width="0.95" stroke-linejoin="round"/><circle cx="10.9" cy="10.7" r="1.5" fill="#f0f070" stroke="#000" stroke-width="1"/></svg>
<div class="t" style="left:21px;top:71px;">ESET Service</div>
<div class="t" style="left:375px;top:71px;">ESET Service</div>
<div class="t" style="left:448px;top:71px;">Работает</div>
<div class="t" style="left:533px;top:71px;">Авто</div>
<div class="t" style="left:619px;top:71px;">Локальная сис...</div>
<svg style="left:4px;top:86px" width="16" height="16" viewBox="0 0 16 16" ><path d="M9.18 5.70 L10.89 6.40 L10.37 7.80 L8.62 7.23 L7.88 8.04 L8.59 9.74 L7.24 10.37 L6.39 8.73 L5.30 8.78 L4.60 10.49 L3.20 9.97 L3.77 8.22 L2.96 7.48 L1.26 8.19 L0.63 6.84 L2.27 5.99 L2.22 4.90 L0.51 4.20 L1.03 2.80 L2.78 3.37 L3.52 2.56 L2.81 0.86 L4.16 0.23 L5.01 1.87 L6.10 1.82 L6.80 0.11 L8.20 0.63 L7.63 2.38 L8.44 3.12 L10.14 2.41 L10.77 3.76 L9.13 4.61Z" fill="#fff" stroke="#000" stroke-width="0.95" stroke-linejoin="round"/><circle cx="5.7" cy="5.3" r="1.4" fill="#fff" stroke="#000" stroke-width="1"/><path d="M14.40 9.86 L16.25 9.94 L16.25 11.46 L14.40 11.54 L13.97 12.58 L15.22 13.94 L14.14 15.02 L12.78 13.77 L11.74 14.20 L11.66 16.05 L10.14 16.05 L10.06 14.20 L9.02 13.77 L7.66 15.02 L6.58 13.94 L7.83 12.58 L7.40 11.54 L5.55 11.46 L5.55 9.94 L7.40 9.86 L7.83 8.82 L6.58 7.46 L7.66 6.38 L9.02 7.63 L10.06 7.20 L10.14 5.35 L11.66 5.35 L11.74 7.20 L12.78 7.63 L14.14 6.38 L15.22 7.46 L13.97 8.82Z" fill="#f0f070" stroke="#000" stroke-width="0.95" stroke-linejoin="round"/><circle cx="10.9" cy="10.7" r="1.5" fill="#f0f070" stroke="#000" stroke-width="1"/></svg>
<div class="t" style="left:21px;top:88px;">EWA net DB Core</div>
<div class="t" style="left:375px;top:88px;"></div>
<div class="t" style="left:448px;top:88px;">Работает</div>
<div class="t" style="left:533px;top:88px;">Авто</div>
<div class="t" style="left:619px;top:88px;">Локальная сис...</div>
<svg style="left:4px;top:103px" width="16" height="16" viewBox="0 0 16 16" ><path d="M9.18 5.70 L10.89 6.40 L10.37 7.80 L8.62 7.23 L7.88 8.04 L8.59 9.74 L7.24 10.37 L6.39 8.73 L5.30 8.78 L4.60 10.49 L3.20 9.97 L3.77 8.22 L2.96 7.48 L1.26 8.19 L0.63 6.84 L2.27 5.99 L2.22 4.90 L0.51 4.20 L1.03 2.80 L2.78 3.37 L3.52 2.56 L2.81 0.86 L4.16 0.23 L5.01 1.87 L6.10 1.82 L6.80 0.11 L8.20 0.63 L7.63 2.38 L8.44 3.12 L10.14 2.41 L10.77 3.76 L9.13 4.61Z" fill="#fff" stroke="#000" stroke-width="0.95" stroke-linejoin="round"/><circle cx="5.7" cy="5.3" r="1.4" fill="#fff" stroke="#000" stroke-width="1"/><path d="M14.40 9.86 L16.25 9.94 L16.25 11.46 L14.40 11.54 L13.97 12.58 L15.22 13.94 L14.14 15.02 L12.78 13.77 L11.74 14.20 L11.66 16.05 L10.14 16.05 L10.06 14.20 L9.02 13.77 L7.66 15.02 L6.58 13.94 L7.83 12.58 L7.40 11.54 L5.55 11.46 L5.55 9.94 L7.40 9.86 L7.83 8.82 L6.58 7.46 L7.66 6.38 L9.02 7.63 L10.06 7.20 L10.14 5.35 L11.66 5.35 L11.74 7.20 L12.78 7.63 L14.14 6.38 L15.22 7.46 L13.97 8.82Z" fill="#f0f070" stroke="#000" stroke-width="0.95" stroke-linejoin="round"/><circle cx="10.9" cy="10.7" r="1.5" fill="#f0f070" stroke="#000" stroke-width="1"/></svg>
<div class="t" style="left:21px;top:105px;">EWA net DB EPC</div>
<div class="t" style="left:375px;top:105px;"></div>
<div class="t" style="left:448px;top:105px;">Работает</div>
<div class="t" style="left:533px;top:105px;">Авто</div>
<div class="t" style="left:619px;top:105px;">Локальная сис...</div>
<svg style="left:4px;top:120px" width="16" height="16" viewBox="0 0 16 16" ><path d="M9.18 5.70 L10.89 6.40 L10.37 7.80 L8.62 7.23 L7.88 8.04 L8.59 9.74 L7.24 10.37 L6.39 8.73 L5.30 8.78 L4.60 10.49 L3.20 9.97 L3.77 8.22 L2.96 7.48 L1.26 8.19 L0.63 6.84 L2.27 5.99 L2.22 4.90 L0.51 4.20 L1.03 2.80 L2.78 3.37 L3.52 2.56 L2.81 0.86 L4.16 0.23 L5.01 1.87 L6.10 1.82 L6.80 0.11 L8.20 0.63 L7.63 2.38 L8.44 3.12 L10.14 2.41 L10.77 3.76 L9.13 4.61Z" fill="#fff" stroke="#000" stroke-width="0.95" stroke-linejoin="round"/><circle cx="5.7" cy="5.3" r="1.4" fill="#fff" stroke="#000" stroke-width="1"/><path d="M14.40 9.86 L16.25 9.94 L16.25 11.46 L14.40 11.54 L13.97 12.58 L15.22 13.94 L14.14 15.02 L12.78 13.77 L11.74 14.20 L11.66 16.05 L10.14 16.05 L10.06 14.20 L9.02 13.77 L7.66 15.02 L6.58 13.94 L7.83 12.58 L7.40 11.54 L5.55 11.46 L5.55 9.94 L7.40 9.86 L7.83 8.82 L6.58 7.46 L7.66 6.38 L9.02 7.63 L10.06 7.20 L10.14 5.35 L11.66 5.35 L11.74 7.20 L12.78 7.63 L14.14 6.38 L15.22 7.46 L13.97 8.82Z" fill="#f0f070" stroke="#000" stroke-width="0.95" stroke-linejoin="round"/><circle cx="10.9" cy="10.7" r="1.5" fill="#f0f070" stroke="#000" stroke-width="1"/></svg>
<div class="t" style="left:21px;top:122px;">EWA net DB WIS</div>
<div class="t" style="left:375px;top:122px;"></div>
<div class="t" style="left:448px;top:122px;">Работает</div>
<div class="t" style="left:533px;top:122px;">Авто</div>
<div class="t" style="left:619px;top:122px;">Локальная сис...</div>
<div style="left:21px;top:136px;width:690px;height:17px;background:#d4d0c8"></div>
<svg style="left:4px;top:137px" width="16" height="16" viewBox="0 0 16 16" ><path d="M9.18 5.70 L10.89 6.40 L10.37 7.80 L8.62 7.23 L7.88 8.04 L8.59 9.74 L7.24 10.37 L6.39 8.73 L5.30 8.78 L4.60 10.49 L3.20 9.97 L3.77 8.22 L2.96 7.48 L1.26 8.19 L0.63 6.84 L2.27 5.99 L2.22 4.90 L0.51 4.20 L1.03 2.80 L2.78 3.37 L3.52 2.56 L2.81 0.86 L4.16 0.23 L5.01 1.87 L6.10 1.82 L6.80 0.11 L8.20 0.63 L7.63 2.38 L8.44 3.12 L10.14 2.41 L10.77 3.76 L9.13 4.61Z" fill="#fff" stroke="#000" stroke-width="0.95" stroke-linejoin="round"/><circle cx="5.7" cy="5.3" r="1.4" fill="#fff" stroke="#000" stroke-width="1"/><path d="M14.40 9.86 L16.25 9.94 L16.25 11.46 L14.40 11.54 L13.97 12.58 L15.22 13.94 L14.14 15.02 L12.78 13.77 L11.74 14.20 L11.66 16.05 L10.14 16.05 L10.06 14.20 L9.02 13.77 L7.66 15.02 L6.58 13.94 L7.83 12.58 L7.40 11.54 L5.55 11.46 L5.55 9.94 L7.40 9.86 L7.83 8.82 L6.58 7.46 L7.66 6.38 L9.02 7.63 L10.06 7.20 L10.14 5.35 L11.66 5.35 L11.74 7.20 L12.78 7.63 L14.14 6.38 L15.22 7.46 L13.97 8.82Z" fill="#f0f070" stroke="#000" stroke-width="0.95" stroke-linejoin="round"/><circle cx="10.9" cy="10.7" r="1.5" fill="#f0f070" stroke="#000" stroke-width="1"/></svg>
<div class="t" style="left:21px;top:139px;">EWA net Server</div>
<div class="t" style="left:375px;top:139px;"></div>
<div class="t" style="left:448px;top:139px;"></div>
<div class="t" style="left:533px;top:139px;">Вручную</div>
<div class="t" style="left:619px;top:139px;">Локальная сис...</div>
<svg style="left:4px;top:154px" width="16" height="16" viewBox="0 0 16 16" ><path d="M9.18 5.70 L10.89 6.40 L10.37 7.80 L8.62 7.23 L7.88 8.04 L8.59 9.74 L7.24 10.37 L6.39 8.73 L5.30 8.78 L4.60 10.49 L3.20 9.97 L3.77 8.22 L2.96 7.48 L1.26 8.19 L0.63 6.84 L2.27 5.99 L2.22 4.90 L0.51 4.20 L1.03 2.80 L2.78 3.37 L3.52 2.56 L2.81 0.86 L4.16 0.23 L5.01 1.87 L6.10 1.82 L6.80 0.11 L8.20 0.63 L7.63 2.38 L8.44 3.12 L10.14 2.41 L10.77 3.76 L9.13 4.61Z" fill="#fff" stroke="#000" stroke-width="0.95" stroke-linejoin="round"/><circle cx="5.7" cy="5.3" r="1.4" fill="#fff" stroke="#000" stroke-width="1"/><path d="M14.40 9.86 L16.25 9.94 L16.25 11.46 L14.40 11.54 L13.97 12.58 L15.22 13.94 L14.14 15.02 L12.78 13.77 L11.74 14.20 L11.66 16.05 L10.14 16.05 L10.06 14.20 L9.02 13.77 L7.66 15.02 L6.58 13.94 L7.83 12.58 L7.40 11.54 L5.55 11.46 L5.55 9.94 L7.40 9.86 L7.83 8.82 L6.58 7.46 L7.66 6.38 L9.02 7.63 L10.06 7.20 L10.14 5.35 L11.66 5.35 L11.74 7.20 L12.78 7.63 L14.14 6.38 L15.22 7.46 L13.97 8.82Z" fill="#f0f070" stroke="#000" stroke-width="0.95" stroke-linejoin="round"/><circle cx="10.9" cy="10.7" r="1.5" fill="#f0f070" stroke="#000" stroke-width="1"/></svg>
<div class="t" style="left:21px;top:156px;">Windows Audio</div>
<div class="t" style="left:375px;top:156px;">Управляе...</div>
<div class="t" style="left:448px;top:156px;"></div>
<div class="t" style="left:533px;top:156px;">Вручную</div>
<div class="t" style="left:619px;top:156px;">Локальная сис...</div>
<svg style="left:4px;top:171px" width="16" height="16" viewBox="0 0 16 16" ><path d="M9.18 5.70 L10.89 6.40 L10.37 7.80 L8.62 7.23 L7.88 8.04 L8.59 9.74 L7.24 10.37 L6.39 8.73 L5.30 8.78 L4.60 10.49 L3.20 9.97 L3.77 8.22 L2.96 7.48 L1.26 8.19 L0.63 6.84 L2.27 5.99 L2.22 4.90 L0.51 4.20 L1.03 2.80 L2.78 3.37 L3.52 2.56 L2.81 0.86 L4.16 0.23 L5.01 1.87 L6.10 1.82 L6.80 0.11 L8.20 0.63 L7.63 2.38 L8.44 3.12 L10.14 2.41 L10.77 3.76 L9.13 4.61Z" fill="#fff" stroke="#000" stroke-width="0.95" stroke-linejoin="round"/><circle cx="5.7" cy="5.3" r="1.4" fill="#fff" stroke="#000" stroke-width="1"/><path d="M14.40 9.86 L16.25 9.94 L16.25 11.46 L14.40 11.54 L13.97 12.58 L15.22 13.94 L14.14 15.02 L12.78 13.77 L11.74 14.20 L11.66 16.05 L10.14 16.05 L10.06 14.20 L9.02 13.77 L7.66 15.02 L6.58 13.94 L7.83 12.58 L7.40 11.54 L5.55 11.46 L5.55 9.94 L7.40 9.86 L7.83 8.82 L6.58 7.46 L7.66 6.38 L9.02 7.63 L10.06 7.20 L10.14 5.35 L11.66 5.35 L11.74 7.20 L12.78 7.63 L14.14 6.38 L15.22 7.46 L13.97 8.82Z" fill="#f0f070" stroke="#000" stroke-width="0.95" stroke-linejoin="round"/><circle cx="10.9" cy="10.7" r="1.5" fill="#f0f070" stroke="#000" stroke-width="1"/></svg>
<div class="t" style="left:21px;top:173px;">Windows Installer</div>
<div class="t" style="left:375px;top:173px;">Предоста...</div>
<div class="t" style="left:448px;top:173px;"></div>
<div class="t" style="left:533px;top:173px;">Вручную</div>
<div class="t" style="left:619px;top:173px;">Локальная сис...</div>
<svg style="left:4px;top:188px" width="16" height="16" viewBox="0 0 16 16" ><path d="M9.18 5.70 L10.89 6.40 L10.37 7.80 L8.62 7.23 L7.88 8.04 L8.59 9.74 L7.24 10.37 L6.39 8.73 L5.30 8.78 L4.60 10.49 L3.20 9.97 L3.77 8.22 L2.96 7.48 L1.26 8.19 L0.63 6.84 L2.27 5.99 L2.22 4.90 L0.51 4.20 L1.03 2.80 L2.78 3.37 L3.52 2.56 L2.81 0.86 L4.16 0.23 L5.01 1.87 L6.10 1.82 L6.80 0.11 L8.20 0.63 L7.63 2.38 L8.44 3.12 L10.14 2.41 L10.77 3.76 L9.13 4.61Z" fill="#fff" stroke="#000" stroke-width="0.95" stroke-linejoin="round"/><circle cx="5.7" cy="5.3" r="1.4" fill="#fff" stroke="#000" stroke-width="1"/><path d="M14.40 9.86 L16.25 9.94 L16.25 11.46 L14.40 11.54 L13.97 12.58 L15.22 13.94 L14.14 15.02 L12.78 13.77 L11.74 14.20 L11.66 16.05 L10.14 16.05 L10.06 14.20 L9.02 13.77 L7.66 15.02 L6.58 13.94 L7.83 12.58 L7.40 11.54 L5.55 11.46 L5.55 9.94 L7.40 9.86 L7.83 8.82 L6.58 7.46 L7.66 6.38 L9.02 7.63 L10.06 7.20 L10.14 5.35 L11.66 5.35 L11.74 7.20 L12.78 7.63 L14.14 6.38 L15.22 7.46 L13.97 8.82Z" fill="#f0f070" stroke="#000" stroke-width="0.95" stroke-linejoin="round"/><circle cx="10.9" cy="10.7" r="1.5" fill="#f0f070" stroke="#000" stroke-width="1"/></svg>
<div class="t" style="left:21px;top:190px;">Автоматическое обновление</div>
<div class="t" style="left:375px;top:190px;">Позволяе...</div>
<div class="t" style="left:448px;top:190px;">Работает</div>
<div class="t" style="left:533px;top:190px;">Авто</div>
<div class="t" style="left:619px;top:190px;">Локальная сис...</div>
<svg style="left:4px;top:205px" width="16" height="16" viewBox="0 0 16 16" ><path d="M9.18 5.70 L10.89 6.40 L10.37 7.80 L8.62 7.23 L7.88 8.04 L8.59 9.74 L7.24 10.37 L6.39 8.73 L5.30 8.78 L4.60 10.49 L3.20 9.97 L3.77 8.22 L2.96 7.48 L1.26 8.19 L0.63 6.84 L2.27 5.99 L2.22 4.90 L0.51 4.20 L1.03 2.80 L2.78 3.37 L3.52 2.56 L2.81 0.86 L4.16 0.23 L5.01 1.87 L6.10 1.82 L6.80 0.11 L8.20 0.63 L7.63 2.38 L8.44 3.12 L10.14 2.41 L10.77 3.76 L9.13 4.61Z" fill="#fff" stroke="#000" stroke-width="0.95" stroke-linejoin="round"/><circle cx="5.7" cy="5.3" r="1.4" fill="#fff" stroke="#000" stroke-width="1"/><path d="M14.40 9.86 L16.25 9.94 L16.25 11.46 L14.40 11.54 L13.97 12.58 L15.22 13.94 L14.14 15.02 L12.78 13.77 L11.74 14.20 L11.66 16.05 L10.14 16.05 L10.06 14.20 L9.02 13.77 L7.66 15.02 L6.58 13.94 L7.83 12.58 L7.40 11.54 L5.55 11.46 L5.55 9.94 L7.40 9.86 L7.83 8.82 L6.58 7.46 L7.66 6.38 L9.02 7.63 L10.06 7.20 L10.14 5.35 L11.66 5.35 L11.74 7.20 L12.78 7.63 L14.14 6.38 L15.22 7.46 L13.97 8.82Z" fill="#f0f070" stroke="#000" stroke-width="0.95" stroke-linejoin="round"/><circle cx="10.9" cy="10.7" r="1.5" fill="#f0f070" stroke="#000" stroke-width="1"/></svg>
<div class="t" style="left:21px;top:207px;">Брандмауэр Windows</div>
<div class="t" style="left:375px;top:207px;">Обеспечи...</div>
<div class="t" style="left:448px;top:207px;"></div>
<div class="t" style="left:533px;top:207px;">Вручную</div>
<div class="t" style="left:619px;top:207px;">Локальная сис...</div>
<svg style="left:4px;top:222px" width="16" height="16" viewBox="0 0 16 16" ><path d="M9.18 5.70 L10.89 6.40 L10.37 7.80 L8.62 7.23 L7.88 8.04 L8.59 9.74 L7.24 10.37 L6.39 8.73 L5.30 8.78 L4.60 10.49 L3.20 9.97 L3.77 8.22 L2.96 7.48 L1.26 8.19 L0.63 6.84 L2.27 5.99 L2.22 4.90 L0.51 4.20 L1.03 2.80 L2.78 3.37 L3.52 2.56 L2.81 0.86 L4.16 0.23 L5.01 1.87 L6.10 1.82 L6.80 0.11 L8.20 0.63 L7.63 2.38 L8.44 3.12 L10.14 2.41 L10.77 3.76 L9.13 4.61Z" fill="#fff" stroke="#000" stroke-width="0.95" stroke-linejoin="round"/><circle cx="5.7" cy="5.3" r="1.4" fill="#fff" stroke="#000" stroke-width="1"/><path d="M14.40 9.86 L16.25 9.94 L16.25 11.46 L14.40 11.54 L13.97 12.58 L15.22 13.94 L14.14 15.02 L12.78 13.77 L11.74 14.20 L11.66 16.05 L10.14 16.05 L10.06 14.20 L9.02 13.77 L7.66 15.02 L6.58 13.94 L7.83 12.58 L7.40 11.54 L5.55 11.46 L5.55 9.94 L7.40 9.86 L7.83 8.82 L6.58 7.46 L7.66 6.38 L9.02 7.63 L10.06 7.20 L10.14 5.35 L11.66 5.35 L11.74 7.20 L12.78 7.63 L14.14 6.38 L15.22 7.46 L13.97 8.82Z" fill="#f0f070" stroke="#000" stroke-width="0.95" stroke-linejoin="round"/><circle cx="10.9" cy="10.7" r="1.5" fill="#f0f070" stroke="#000" stroke-width="1"/></svg>
<div class="t" style="left:21px;top:224px;">Веб-клиент</div>
<div class="t" style="left:375px;top:224px;">Позволяе...</div>
<div class="t" style="left:448px;top:224px;"></div>
<div class="t" style="left:533px;top:224px;letter-spacing:0.28px">Отключено</div>
<div class="t" style="left:619px;top:224px;">Локальная сис...</div>
<svg style="left:4px;top:239px" width="16" height="16" viewBox="0 0 16 16" ><path d="M9.18 5.70 L10.89 6.40 L10.37 7.80 L8.62 7.23 L7.88 8.04 L8.59 9.74 L7.24 10.37 L6.39 8.73 L5.30 8.78 L4.60 10.49 L3.20 9.97 L3.77 8.22 L2.96 7.48 L1.26 8.19 L0.63 6.84 L2.27 5.99 L2.22 4.90 L0.51 4.20 L1.03 2.80 L2.78 3.37 L3.52 2.56 L2.81 0.86 L4.16 0.23 L5.01 1.87 L6.10 1.82 L6.80 0.11 L8.20 0.63 L7.63 2.38 L8.44 3.12 L10.14 2.41 L10.77 3.76 L9.13 4.61Z" fill="#fff" stroke="#000" stroke-width="0.95" stroke-linejoin="round"/><circle cx="5.7" cy="5.3" r="1.4" fill="#fff" stroke="#000" stroke-width="1"/><path d="M14.40 9.86 L16.25 9.94 L16.25 11.46 L14.40 11.54 L13.97 12.58 L15.22 13.94 L14.14 15.02 L12.78 13.77 L11.74 14.20 L11.66 16.05 L10.14 16.05 L10.06 14.20 L9.02 13.77 L7.66 15.02 L6.58 13.94 L7.83 12.58 L7.40 11.54 L5.55 11.46 L5.55 9.94 L7.40 9.86 L7.83 8.82 L6.58 7.46 L7.66 6.38 L9.02 7.63 L10.06 7.20 L10.14 5.35 L11.66 5.35 L11.74 7.20 L12.78 7.63 L14.14 6.38 L15.22 7.46 L13.97 8.82Z" fill="#f0f070" stroke="#000" stroke-width="0.95" stroke-linejoin="round"/><circle cx="10.9" cy="10.7" r="1.5" fill="#f0f070" stroke="#000" stroke-width="1"/></svg>
<div class="t" style="left:21px;top:241px;">Вторичный вход в систему</div>
<div class="t" style="left:375px;top:241px;">Позволяе...</div>
<div class="t" style="left:448px;top:241px;"></div>
<div class="t" style="left:533px;top:241px;">Вручную</div>
<div class="t" style="left:619px;top:241px;">Локальная сис...</div>
<svg style="left:4px;top:256px" width="16" height="16" viewBox="0 0 16 16" ><path d="M9.18 5.70 L10.89 6.40 L10.37 7.80 L8.62 7.23 L7.88 8.04 L8.59 9.74 L7.24 10.37 L6.39 8.73 L5.30 8.78 L4.60 10.49 L3.20 9.97 L3.77 8.22 L2.96 7.48 L1.26 8.19 L0.63 6.84 L2.27 5.99 L2.22 4.90 L0.51 4.20 L1.03 2.80 L2.78 3.37 L3.52 2.56 L2.81 0.86 L4.16 0.23 L5.01 1.87 L6.10 1.82 L6.80 0.11 L8.20 0.63 L7.63 2.38 L8.44 3.12 L10.14 2.41 L10.77 3.76 L9.13 4.61Z" fill="#fff" stroke="#000" stroke-width="0.95" stroke-linejoin="round"/><circle cx="5.7" cy="5.3" r="1.4" fill="#fff" stroke="#000" stroke-width="1"/><path d="M14.40 9.86 L16.25 9.94 L16.25 11.46 L14.40 11.54 L13.97 12.58 L15.22 13.94 L14.14 15.02 L12.78 13.77 L11.74 14.20 L11.66 16.05 L10.14 16.05 L10.06 14.20 L9.02 13.77 L7.66 15.02 L6.58 13.94 L7.83 12.58 L7.40 11.54 L5.55 11.46 L5.55 9.94 L7.40 9.86 L7.83 8.82 L6.58 7.46 L7.66 6.38 L9.02 7.63 L10.06 7.20 L10.14 5.35 L11.66 5.35 L11.74 7.20 L12.78 7.63 L14.14 6.38 L15.22 7.46 L13.97 8.82Z" fill="#f0f070" stroke="#000" stroke-width="0.95" stroke-linejoin="round"/><circle cx="10.9" cy="10.7" r="1.5" fill="#f0f070" stroke="#000" stroke-width="1"/></svg>
<div class="t" style="left:21px;top:258px;">Диспетчер авто-подключений</div>
<div class="t" style="left:375px;top:258px;">Предоста...</div>
<div class="t" style="left:448px;top:258px;">Работает</div>
<div class="t" style="left:533px;top:258px;">Авто</div>
<div class="t" style="left:619px;top:258px;">Локальная сис...</div>
<svg style="left:4px;top:273px" width="16" height="16" viewBox="0 0 16 16" ><path d="M9.18 5.70 L10.89 6.40 L10.37 7.80 L8.62 7.23 L7.88 8.04 L8.59 9.74 L7.24 10.37 L6.39 8.73 L5.30 8.78 L4.60 10.49 L3.20 9.97 L3.77 8.22 L2.96 7.48 L1.26 8.19 L0.63 6.84 L2.27 5.99 L2.22 4.90 L0.51 4.20 L1.03 2.80 L2.78 3.37 L3.52 2.56 L2.81 0.86 L4.16 0.23 L5.01 1.87 L6.10 1.82 L6.80 0.11 L8.20 0.63 L7.63 2.38 L8.44 3.12 L10.14 2.41 L10.77 3.76 L9.13 4.61Z" fill="#fff" stroke="#000" stroke-width="0.95" stroke-linejoin="round"/><circle cx="5.7" cy="5.3" r="1.4" fill="#fff" stroke="#000" stroke-width="1"/><path d="M14.40 9.86 L16.25 9.94 L16.25 11.46 L14.40 11.54 L13.97 12.58 L15.22 13.94 L14.14 15.02 L12.78 13.77 L11.74 14.20 L11.66 16.05 L10.14 16.05 L10.06 14.20 L9.02 13.77 L7.66 15.02 L6.58 13.94 L7.83 12.58 L7.40 11.54 L5.55 11.46 L5.55 9.94 L7.40 9.86 L7.83 8.82 L6.58 7.46 L7.66 6.38 L9.02 7.63 L10.06 7.20 L10.14 5.35 L11.66 5.35 L11.74 7.20 L12.78 7.63 L14.14 6.38 L15.22 7.46 L13.97 8.82Z" fill="#f0f070" stroke="#000" stroke-width="0.95" stroke-linejoin="round"/><circle cx="10.9" cy="10.7" r="1.5" fill="#f0f070" stroke="#000" stroke-width="1"/></svg>
<div class="t" style="left:21px;top:275px;">Диспетчер отгрузки</div>
<div class="t" style="left:375px;top:275px;">Управляе...</div>
<div class="t" style="left:448px;top:275px;"></div>
<div class="t" style="left:533px;top:275px;letter-spacing:0.28px">Отключено</div>
<div class="t" style="left:619px;top:275px;">Local Service</div>
<svg style="left:4px;top:290px" width="16" height="16" viewBox="0 0 16 16" ><path d="M9.18 5.70 L10.89 6.40 L10.37 7.80 L8.62 7.23 L7.88 8.04 L8.59 9.74 L7.24 10.37 L6.39 8.73 L5.30 8.78 L4.60 10.49 L3.20 9.97 L3.77 8.22 L2.96 7.48 L1.26 8.19 L0.63 6.84 L2.27 5.99 L2.22 4.90 L0.51 4.20 L1.03 2.80 L2.78 3.37 L3.52 2.56 L2.81 0.86 L4.16 0.23 L5.01 1.87 L6.10 1.82 L6.80 0.11 L8.20 0.63 L7.63 2.38 L8.44 3.12 L10.14 2.41 L10.77 3.76 L9.13 4.61Z" fill="#fff" stroke="#000" stroke-width="0.95" stroke-linejoin="round"/><circle cx="5.7" cy="5.3" r="1.4" fill="#fff" stroke="#000" stroke-width="1"/><path d="M14.40 9.86 L16.25 9.94 L16.25 11.46 L14.40 11.54 L13.97 12.58 L15.22 13.94 L14.14 15.02 L12.78 13.77 L11.74 14.20 L11.66 16.05 L10.14 16.05 L10.06 14.20 L9.02 13.77 L7.66 15.02 L6.58 13.94 L7.83 12.58 L7.40 11.54 L5.55 11.46 L5.55 9.94 L7.40 9.86 L7.83 8.82 L6.58 7.46 L7.66 6.38 L9.02 7.63 L10.06 7.20 L10.14 5.35 L11.66 5.35 L11.74 7.20 L12.78 7.63 L14.14 6.38 L15.22 7.46 L13.97 8.82Z" fill="#f0f070" stroke="#000" stroke-width="0.95" stroke-linejoin="round"/><circle cx="10.9" cy="10.7" r="1.5" fill="#f0f070" stroke="#000" stroke-width="1"/></svg>
<div class="t" style="left:21px;top:292px;">Диспетчер логических дисков</div>
<div class="t" style="left:375px;top:292px;">Обеспечи...</div>
<div class="t" style="left:448px;top:292px;">Работает</div>
<div class="t" style="left:533px;top:292px;">Авто</div>
<div class="t" style="left:619px;top:292px;">Локальная сис...</div>
<svg style="left:4px;top:307px" width="16" height="16" viewBox="0 0 16 16" ><path d="M9.18 5.70 L10.89 6.40 L10.37 7.80 L8.62 7.23 L7.88 8.04 L8.59 9.74 L7.24 10.37 L6.39 8.73 L5.30 8.78 L4.60 10.49 L3.20 9.97 L3.77 8.22 L2.96 7.48 L1.26 8.19 L0.63 6.84 L2.27 5.99 L2.22 4.90 L0.51 4.20 L1.03 2.80 L2.78 3.37 L3.52 2.56 L2.81 0.86 L4.16 0.23 L5.01 1.87 L6.10 1.82 L6.80 0.11 L8.20 0.63 L7.63 2.38 L8.44 3.12 L10.14 2.41 L10.77 3.76 L9.13 4.61Z" fill="#fff" stroke="#000" stroke-width="0.95" stroke-linejoin="round"/><circle cx="5.7" cy="5.3" r="1.4" fill="#fff" stroke="#000" stroke-width="1"/><path d="M14.40 9.86 L16.25 9.94 L16.25 11.46 L14.40 11.54 L13.97 12.58 L15.22 13.94 L14.14 15.02 L12.78 13.77 L11.74 14.20 L11.66 16.05 L10.14 16.05 L10.06 14.20 L9.02 13.77 L7.66 15.02 L6.58 13.94 L7.83 12.58 L7.40 11.54 L5.55 11.46 L5.55 9.94 L7.40 9.86 L7.83 8.82 L6.58 7.46 L7.66 6.38 L9.02 7.63 L10.06 7.20 L10.14 5.35 L11.66 5.35 L11.74 7.20 L12.78 7.63 L14.14 6.38 L15.22 7.46 L13.97 8.82Z" fill="#f0f070" stroke="#000" stroke-width="0.95" stroke-linejoin="round"/><circle cx="10.9" cy="10.7" r="1.5" fill="#f0f070" stroke="#000" stroke-width="1"/></svg>
<div class="t" style="left:21px;top:309px;">Диспетчер очереди печати</div>
<div class="t" style="left:375px;top:309px;">Позволяе...</div>
<div class="t" style="left:448px;top:309px;"></div>
<div class="t" style="left:533px;top:309px;">Вручную</div>
<div class="t" style="left:619px;top:309px;">Локальная сис...</div>
<svg style="left:4px;top:324px" width="16" height="16" viewBox="0 0 16 16" ><path d="M9.18 5.70 L10.89 6.40 L10.37 7.80 L8.62 7.23 L7.88 8.04 L8.59 9.74 L7.24 10.37 L6.39 8.73 L5.30 8.78 L4.60 10.49 L3.20 9.97 L3.77 8.22 L2.96 7.48 L1.26 8.19 L0.63 6.84 L2.27 5.99 L2.22 4.90 L0.51 4.20 L1.03 2.80 L2.78 3.37 L3.52 2.56 L2.81 0.86 L4.16 0.23 L5.01 1.87 L6.10 1.82 L6.80 0.11 L8.20 0.63 L7.63 2.38 L8.44 3.12 L10.14 2.41 L10.77 3.76 L9.13 4.61Z" fill="#fff" stroke="#000" stroke-width="0.95" stroke-linejoin="round"/><circle cx="5.7" cy="5.3" r="1.4" fill="#fff" stroke="#000" stroke-width="1"/><path d="M14.40 9.86 L16.25 9.94 L16.25 11.46 L14.40 11.54 L13.97 12.58 L15.22 13.94 L14.14 15.02 L12.78 13.77 L11.74 14.20 L11.66 16.05 L10.14 16.05 L10.06 14.20 L9.02 13.77 L7.66 15.02 L6.58 13.94 L7.83 12.58 L7.40 11.54 L5.55 11.46 L5.55 9.94 L7.40 9.86 L7.83 8.82 L6.58 7.46 L7.66 6.38 L9.02 7.63 L10.06 7.20 L10.14 5.35 L11.66 5.35 L11.74 7.20 L12.78 7.63 L14.14 6.38 L15.22 7.46 L13.97 8.82Z" fill="#f0f070" stroke="#000" stroke-width="0.95" stroke-linejoin="round"/><circle cx="10.9" cy="10.7" r="1.5" fill="#f0f070" stroke="#000" stroke-width="1"/></svg>
<div class="t" style="left:21px;top:326px;">Диспетчер подключений</div>
<div class="t" style="left:375px;top:326px;">Предоста...</div>
<div class="t" style="left:448px;top:326px;">Работает</div>
<div class="t" style="left:533px;top:326px;">Авто</div>
<div class="t" style="left:619px;top:326px;">Локальная сис...</div>
<svg style="left:4px;top:341px" width="16" height="16" viewBox="0 0 16 16" ><path d="M9.18 5.70 L10.89 6.40 L10.37 7.80 L8.62 7.23 L7.88 8.04 L8.59 9.74 L7.24 10.37 L6.39 8.73 L5.30 8.78 L4.60 10.49 L3.20 9.97 L3.77 8.22 L2.96 7.48 L1.26 8.19 L0.63 6.84 L2.27 5.99 L2.22 4.90 L0.51 4.20 L1.03 2.80 L2.78 3.37 L3.52 2.56 L2.81 0.86 L4.16 0.23 L5.01 1.87 L6.10 1.82 L6.80 0.11 L8.20 0.63 L7.63 2.38 L8.44 3.12 L10.14 2.41 L10.77 3.76 L9.13 4.61Z" fill="#fff" stroke="#000" stroke-width="0.95" stroke-linejoin="round"/><circle cx="5.7" cy="5.3" r="1.4" fill="#fff" stroke="#000" stroke-width="1"/><path d="M14.40 9.86 L16.25 9.94 L16.25 11.46 L14.40 11.54 L13.97 12.58 L15.22 13.94 L14.14 15.02 L12.78 13.77 L11.74 14.20 L11.66 16.05 L10.14 16.05 L10.06 14.20 L9.02 13.77 L7.66 15.02 L6.58 13.94 L7.83 12.58 L7.40 11.54 L5.55 11.46 L5.55 9.94 L7.40 9.86 L7.83 8.82 L6.58 7.46 L7.66 6.38 L9.02 7.63 L10.06 7.20 L10.14 5.35 L11.66 5.35 L11.74 7.20 L12.78 7.63 L14.14 6.38 L15.22 7.46 L13.97 8.82Z" fill="#f0f070" stroke="#000" stroke-width="0.95" stroke-linejoin="round"/><circle cx="10.9" cy="10.7" r="1.5" fill="#f0f070" stroke="#000" stroke-width="1"/></svg>
<div class="t" style="left:21px;top:343px;">Диспетчер сеанса справки</div>
<div class="t" style="left:375px;top:343px;">Управляе...</div>
<div class="t" style="left:448px;top:343px;"></div>
<div class="t" style="left:533px;top:343px;">Вручную</div>
<div class="t" style="left:619px;top:343px;">Локальная сис...</div>
<svg style="left:4px;top:358px" width="16" height="16" viewBox="0 0 16 16" ><path d="M9.18 5.70 L10.89 6.40 L10.37 7.80 L8.62 7.23 L7.88 8.04 L8.59 9.74 L7.24 10.37 L6.39 8.73 L5.30 8.78 L4.60 10.49 L3.20 9.97 L3.77 8.22 L2.96 7.48 L1.26 8.19 L0.63 6.84 L2.27 5.99 L2.22 4.90 L0.51 4.20 L1.03 2.80 L2.78 3.37 L3.52 2.56 L2.81 0.86 L4.16 0.23 L5.01 1.87 L6.10 1.82 L6.80 0.11 L8.20 0.63 L7.63 2.38 L8.44 3.12 L10.14 2.41 L10.77 3.76 L9.13 4.61Z" fill="#fff" stroke="#000" stroke-width="0.95" stroke-linejoin="round"/><circle cx="5.7" cy="5.3" r="1.4" fill="#fff" stroke="#000" stroke-width="1"/><path d="M14.40 9.86 L16.25 9.94 L16.25 11.46 L14.40 11.54 L13.97 12.58 L15.22 13.94 L14.14 15.02 L12.78 13.77 L11.74 14.20 L11.66 16.05 L10.14 16.05 L10.06 14.20 L9.02 13.77 L7.66 15.02 L6.58 13.94 L7.83 12.58 L7.40 11.54 L5.55 11.46 L5.55 9.94 L7.40 9.86 L7.83 8.82 L6.58 7.46 L7.66 6.38 L9.02 7.63 L10.06 7.20 L10.14 5.35 L11.66 5.35 L11.74 7.20 L12.78 7.63 L14.14 6.38 L15.22 7.46 L13.97 8.82Z" fill="#f0f070" stroke="#000" stroke-width="0.95" stroke-linejoin="round"/><circle cx="10.9" cy="10.7" r="1.5" fill="#f0f070" stroke="#000" stroke-width="1"/></svg>
<div class="t" style="left:21px;top:360px;">Диспетчер сетевого DDE</div>
<div class="t" style="left:375px;top:360px;">Управляе...</div>
<div class="t" style="left:448px;top:360px;"></div>
<div class="t" style="left:533px;top:360px;">Вручную</div>
<div class="t" style="left:619px;top:360px;">Локальная сис...</div>
<svg style="left:4px;top:375px" width="16" height="16" viewBox="0 0 16 16" ><path d="M9.18 5.70 L10.89 6.40 L10.37 7.80 L8.62 7.23 L7.88 8.04 L8.59 9.74 L7.24 10.37 L6.39 8.73 L5.30 8.78 L4.60 10.49 L3.20 9.97 L3.77 8.22 L2.96 7.48 L1.26 8.19 L0.63 6.84 L2.27 5.99 L2.22 4.90 L0.51 4.20 L1.03 2.80 L2.78 3.37 L3.52 2.56 L2.81 0.86 L4.16 0.23 L5.01 1.87 L6.10 1.82 L6.80 0.11 L8.20 0.63 L7.63 2.38 L8.44 3.12 L10.14 2.41 L10.77 3.76 L9.13 4.61Z" fill="#fff" stroke="#000" stroke-width="0.95" stroke-linejoin="round"/><circle cx="5.7" cy="5.3" r="1.4" fill="#fff" stroke="#000" stroke-width="1"/><path d="M14.40 9.86 L16.25 9.94 L16.25 11.46 L14.40 11.54 L13.97 12.58 L15.22 13.94 L14.14 15.02 L12.78 13.77 L11.74 14.20 L11.66 16.05 L10.14 16.05 L10.06 14.20 L9.02 13.77 L7.66 15.02 L6.58 13.94 L7.83 12.58 L7.40 11.54 L5.55 11.46 L5.55 9.94 L7.40 9.86 L7.83 8.82 L6.58 7.46 L7.66 6.38 L9.02 7.63 L10.06 7.20 L10.14 5.35 L11.66 5.35 L11.74 7.20 L12.78 7.63 L14.14 6.38 L15.22 7.46 L13.97 8.82Z" fill="#f0f070" stroke="#000" stroke-width="0.95" stroke-linejoin="round"/><circle cx="10.9" cy="10.7" r="1.5" fill="#f0f070" stroke="#000" stroke-width="1"/></svg>
<div class="t" style="left:21px;top:377px;">Диспетчер учетных записей</div>
<div class="t" style="left:375px;top:377px;">Обеспечи...</div>
<div class="t" style="left:448px;top:377px;"></div>
<div class="t" style="left:533px;top:377px;letter-spacing:0.28px">Отключено</div>
<div class="t" style="left:619px;top:377px;">Локальная сис...</div>
<svg style="left:4px;top:392px" width="16" height="16" viewBox="0 0 16 16" ><path d="M9.18 5.70 L10.89 6.40 L10.37 7.80 L8.62 7.23 L7.88 8.04 L8.59 9.74 L7.24 10.37 L6.39 8.73 L5.30 8.78 L4.60 10.49 L3.20 9.97 L3.77 8.22 L2.96 7.48 L1.26 8.19 L0.63 6.84 L2.27 5.99 L2.22 4.90 L0.51 4.20 L1.03 2.80 L2.78 3.37 L3.52 2.56 L2.81 0.86 L4.16 0.23 L5.01 1.87 L6.10 1.82 L6.80 0.11 L8.20 0.63 L7.63 2.38 L8.44 3.12 L10.14 2.41 L10.77 3.76 L9.13 4.61Z" fill="#fff" stroke="#000" stroke-width="0.95" stroke-linejoin="round"/><circle cx="5.7" cy="5.3" r="1.4" fill="#fff" stroke="#000" stroke-width="1"/><path d="M14.40 9.86 L16.25 9.94 L16.25 11.46 L14.40 11.54 L13.97 12.58 L15.22 13.94 L14.14 15.02 L12.78 13.77 L11.74 14.20 L11.66 16.05 L10.14 16.05 L10.06 14.20 L9.02 13.77 L7.66 15.02 L6.58 13.94 L7.83 12.58 L7.40 11.54 L5.55 11.46 L5.55 9.94 L7.40 9.86 L7.83 8.82 L6.58 7.46 L7.66 6.38 L9.02 7.63 L10.06 7.20 L10.14 5.35 L11.66 5.35 L11.74 7.20 L12.78 7.63 L14.14 6.38 L15.22 7.46 L13.97 8.82Z" fill="#f0f070" stroke="#000" stroke-width="0.95" stroke-linejoin="round"/><circle cx="10.9" cy="10.7" r="1.5" fill="#f0f070" stroke="#000" stroke-width="1"/></svg>
<div class="t" style="left:21px;top:394px;">Доступ к HID-устройствам</div>
<div class="t" style="left:375px;top:394px;">Обеспечи...</div>
<div class="t" style="left:448px;top:394px;"></div>
<div class="t" style="left:533px;top:394px;letter-spacing:0.28px">Отключено</div>
<div class="t" style="left:619px;top:394px;">Local Service</div>
<svg style="left:4px;top:409px" width="16" height="16" viewBox="0 0 16 16" ><path d="M9.18 5.70 L10.89 6.40 L10.37 7.80 L8.62 7.23 L7.88 8.04 L8.59 9.74 L7.24 10.37 L6.39 8.73 L5.30 8.78 L4.60 10.49 L3.20 9.97 L3.77 8.22 L2.96 7.48 L1.26 8.19 L0.63 6.84 L2.27 5.99 L2.22 4.90 L0.51 4.20 L1.03 2.80 L2.78 3.37 L3.52 2.56 L2.81 0.86 L4.16 0.23 L5.01 1.87 L6.10 1.82 L6.80 0.11 L8.20 0.63 L7.63 2.38 L8.44 3.12 L10.14 2.41 L10.77 3.76 L9.13 4.61Z" fill="#fff" stroke="#000" stroke-width="0.95" stroke-linejoin="round"/><circle cx="5.7" cy="5.3" r="1.4" fill="#fff" stroke="#000" stroke-width="1"/><path d="M14.40 9.86 L16.25 9.94 L16.25 11.46 L14.40 11.54 L13.97 12.58 L15.22 13.94 L14.14 15.02 L12.78 13.77 L11.74 14.20 L11.66 16.05 L10.14 16.05 L10.06 14.20 L9.02 13.77 L7.66 15.02 L6.58 13.94 L7.83 12.58 L7.40 11.54 L5.55 11.46 L5.55 9.94 L7.40 9.86 L7.83 8.82 L6.58 7.46 L7.66 6.38 L9.02 7.63 L10.06 7.20 L10.14 5.35 L11.66 5.35 L11.74 7.20 L12.78 7.63 L14.14 6.38 L15.22 7.46 L13.97 8.82Z" fill="#f0f070" stroke="#000" stroke-width="0.95" stroke-linejoin="round"/><circle cx="10.9" cy="10.7" r="1.5" fill="#f0f070" stroke="#000" stroke-width="1"/></svg>
<div class="t" style="left:21px;top:411px;">Журнал событий</div>
<div class="t" style="left:375px;top:411px;">Обеспечи...</div>
<div class="t" style="left:448px;top:411px;">Работает</div>
<div class="t" style="left:533px;top:411px;">Авто</div>
<div class="t" style="left:619px;top:411px;">Локальная сис...</div>
<svg style="left:4px;top:426px" width="16" height="16" viewBox="0 0 16 16" ><path d="M9.18 5.70 L10.89 6.40 L10.37 7.80 L8.62 7.23 L7.88 8.04 L8.59 9.74 L7.24 10.37 L6.39 8.73 L5.30 8.78 L4.60 10.49 L3.20 9.97 L3.77 8.22 L2.96 7.48 L1.26 8.19 L0.63 6.84 L2.27 5.99 L2.22 4.90 L0.51 4.20 L1.03 2.80 L2.78 3.37 L3.52 2.56 L2.81 0.86 L4.16 0.23 L5.01 1.87 L6.10 1.82 L6.80 0.11 L8.20 0.63 L7.63 2.38 L8.44 3.12 L10.14 2.41 L10.77 3.76 L9.13 4.61Z" fill="#fff" stroke="#000" stroke-width="0.95" stroke-linejoin="round"/><circle cx="5.7" cy="5.3" r="1.4" fill="#fff" stroke="#000" stroke-width="1"/><path d="M14.40 9.86 L16.25 9.94 L16.25 11.46 L14.40 11.54 L13.97 12.58 L15.22 13.94 L14.14 15.02 L12.78 13.77 L11.74 14.20 L11.66 16.05 L10.14 16.05 L10.06 14.20 L9.02 13.77 L7.66 15.02 L6.58 13.94 L7.83 12.58 L7.40 11.54 L5.55 11.46 L5.55 9.94 L7.40 9.86 L7.83 8.82 L6.58 7.46 L7.66 6.38 L9.02 7.63 L10.06 7.20 L10.14 5.35 L11.66 5.35 L11.74 7.20 L12.78 7.63 L14.14 6.38 L15.22 7.46 L13.97 8.82Z" fill="#f0f070" stroke="#000" stroke-width="0.95" stroke-linejoin="round"/><circle cx="10.9" cy="10.7" r="1.5" fill="#f0f070" stroke="#000" stroke-width="1"/></svg>
<div class="t" style="left:21px;top:428px;">Журналы и оповещения</div>
<div class="t" style="left:375px;top:428px;">Управляе...</div>
<div class="t" style="left:448px;top:428px;"></div>
<div class="t" style="left:533px;top:428px;">Вручную</div>
<div class="t" style="left:619px;top:428px;">Локальная сис...</div>
<svg style="left:4px;top:443px" width="16" height="16" viewBox="0 0 16 16" ><path d="M9.18 5.70 L10.89 6.40 L10.37 7.80 L8.62 7.23 L7.88 8.04 L8.59 9.74 L7.24 10.37 L6.39 8.73 L5.30 8.78 L4.60 10.49 L3.20 9.97 L3.77 8.22 L2.96 7.48 L1.26 8.19 L0.63 6.84 L2.27 5.99 L2.22 4.90 L0.51 4.20 L1.03 2.80 L2.78 3.37 L3.52 2.56 L2.81 0.86 L4.16 0.23 L5.01 1.87 L6.10 1.82 L6.80 0.11 L8.20 0.63 L7.63 2.38 L8.44 3.12 L10.14 2.41 L10.77 3.76 L9.13 4.61Z" fill="#fff" stroke="#000" stroke-width="0.95" stroke-linejoin="round"/><circle cx="5.7" cy="5.3" r="1.4" fill="#fff" stroke="#000" stroke-width="1"/><path d="M14.40 9.86 L16.25 9.94 L16.25 11.46 L14.40 11.54 L13.97 12.58 L15.22 13.94 L14.14 15.02 L12.78 13.77 L11.74 14.20 L11.66 16.05 L10.14 16.05 L10.06 14.20 L9.02 13.77 L7.66 15.02 L6.58 13.94 L7.83 12.58 L7.40 11.54 L5.55 11.46 L5.55 9.94 L7.40 9.86 L7.83 8.82 L6.58 7.46 L7.66 6.38 L9.02 7.63 L10.06 7.20 L10.14 5.35 L11.66 5.35 L11.74 7.20 L12.78 7.63 L14.14 6.38 L15.22 7.46 L13.97 8.82Z" fill="#f0f070" stroke="#000" stroke-width="0.95" stroke-linejoin="round"/><circle cx="10.9" cy="10.7" r="1.5" fill="#f0f070" stroke="#000" stroke-width="1"/></svg>
<div class="t" style="left:21px;top:445px;">Запуск серверных</div>
<div class="t" style="left:375px;top:445px;">Обеспечи...</div>
<div class="t" style="left:448px;top:445px;">Работает</div>
<div class="t" style="left:533px;top:445px;">Авто</div>
<div class="t" style="left:619px;top:445px;">Локальная сис...</div>
<svg style="left:4px;top:460px" width="16" height="16" viewBox="0 0 16 16" ><path d="M9.18 5.70 L10.89 6.40 L10.37 7.80 L8.62 7.23 L7.88 8.04 L8.59 9.74 L7.24 10.37 L6.39 8.73 L5.30 8.78 L4.60 10.49 L3.20 9.97 L3.77 8.22 L2.96 7.48 L1.26 8.19 L0.63 6.84 L2.27 5.99 L2.22 4.90 L0.51 4.20 L1.03 2.80 L2.78 3.37 L3.52 2.56 L2.81 0.86 L4.16 0.23 L5.01 1.87 L6.10 1.82 L6.80 0.11 L8.20 0.63 L7.63 2.38 L8.44 3.12 L10.14 2.41 L10.77 3.76 L9.13 4.61Z" fill="#fff" stroke="#000" stroke-width="0.95" stroke-linejoin="round"/><circle cx="5.7" cy="5.3" r="1.4" fill="#fff" stroke="#000" stroke-width="1"/><path d="M14.40 9.86 L16.25 9.94 L16.25 11.46 L14.40 11.54 L13.97 12.58 L15.22 13.94 L14.14 15.02 L12.78 13.77 L11.74 14.20 L11.66 16.05 L10.14 16.05 L10.06 14.20 L9.02 13.77 L7.66 15.02 L6.58 13.94 L7.83 12.58 L7.40 11.54 L5.55 11.46 L5.55 9.94 L7.40 9.86 L7.83 8.82 L6.58 7.46 L7.66 6.38 L9.02 7.63 L10.06 7.20 L10.14 5.35 L11.66 5.35 L11.74 7.20 L12.78 7.63 L14.14 6.38 L15.22 7.46 L13.97 8.82Z" fill="#f0f070" stroke="#000" stroke-width="0.95" stroke-linejoin="round"/><circle cx="10.9" cy="10.7" r="1.5" fill="#f0f070" stroke="#000" stroke-width="1"/></svg>
<div class="t" style="left:21px;top:462px;">Защищенное</div>
<div class="t" style="left:375px;top:462px;">Обеспечи...</div>
<div class="t" style="left:448px;top:462px;"></div>
<div class="t" style="left:533px;top:462px;">Вручную</div>
<div class="t" style="left:619px;top:462px;">Локальная сис...</div>
<svg style="left:4px;top:477px" width="16" height="16" viewBox="0 0 16 16" ><path d="M9.18 5.70 L10.89 6.40 L10.37 7.80 L8.62 7.23 L7.88 8.04 L8.59 9.74 L7.24 10.37 L6.39 8.73 L5.30 8.78 L4.60 10.49 L3.20 9.97 L3.77 8.22 L2.96 7.48 L1.26 8.19 L0.63 6.84 L2.27 5.99 L2.22 4.90 L0.51 4.20 L1.03 2.80 L2.78 3.37 L3.52 2.56 L2.81 0.86 L4.16 0.23 L5.01 1.87 L6.10 1.82 L6.80 0.11 L8.20 0.63 L7.63 2.38 L8.44 3.12 L10.14 2.41 L10.77 3.76 L9.13 4.61Z" fill="#fff" stroke="#000" stroke-width="0.95" stroke-linejoin="round"/><circle cx="5.7" cy="5.3" r="1.4" fill="#fff" stroke="#000" stroke-width="1"/><path d="M14.40 9.86 L16.25 9.94 L16.25 11.46 L14.40 11.54 L13.97 12.58 L15.22 13.94 L14.14 15.02 L12.78 13.77 L11.74 14.20 L11.66 16.05 L10.14 16.05 L10.06 14.20 L9.02 13.77 L7.66 15.02 L6.58 13.94 L7.83 12.58 L7.40 11.54 L5.55 11.46 L5.55 9.94 L7.40 9.86 L7.83 8.82 L6.58 7.46 L7.66 6.38 L9.02 7.63 L10.06 7.20 L10.14 5.35 L11.66 5.35 L11.74 7.20 L12.78 7.63 L14.14 6.38 L15.22 7.46 L13.97 8.82Z" fill="#f0f070" stroke="#000" stroke-width="0.95" stroke-linejoin="round"/><circle cx="10.9" cy="10.7" r="1.5" fill="#f0f070" stroke="#000" stroke-width="1"/></svg>
<div class="t" style="left:21px;top:479px;">Инструментарий</div>
<div class="t" style="left:375px;top:479px;">Предоста...</div>
<div class="t" style="left:448px;top:479px;">Работает</div>
<div class="t" style="left:533px;top:479px;">Авто</div>
<div class="t" style="left:619px;top:479px;">Локальная сис...</div>
<svg style="left:4px;top:494px" width="16" height="16" viewBox="0 0 16 16" ><path d="M9.18 5.70 L10.89 6.40 L10.37 7.80 L8.62 7.23 L7.88 8.04 L8.59 9.74 L7.24 10.37 L6.39 8.73 L5.30 8.78 L4.60 10.49 L3.20 9.97 L3.77 8.22 L2.96 7.48 L1.26 8.19 L0.63 6.84 L2.27 5.99 L2.22 4.90 L0.51 4.20 L1.03 2.80 L2.78 3.37 L3.52 2.56 L2.81 0.86 L4.16 0.23 L5.01 1.87 L6.10 1.82 L6.80 0.11 L8.20 0.63 L7.63 2.38 L8.44 3.12 L10.14 2.41 L10.77 3.76 L9.13 4.61Z" fill="#fff" stroke="#000" stroke-width="0.95" stroke-linejoin="round"/><circle cx="5.7" cy="5.3" r="1.4" fill="#fff" stroke="#000" stroke-width="1"/><path d="M14.40 9.86 L16.25 9.94 L16.25 11.46 L14.40 11.54 L13.97 12.58 L15.22 13.94 L14.14 15.02 L12.78 13.77 L11.74 14.20 L11.66 16.05 L10.14 16.05 L10.06 14.20 L9.02 13.77 L7.66 15.02 L6.58 13.94 L7.83 12.58 L7.40 11.54 L5.55 11.46 L5.55 9.94 L7.40 9.86 L7.83 8.82 L6.58 7.46 L7.66 6.38 L9.02 7.63 L10.06 7.20 L10.14 5.35 L11.66 5.35 L11.74 7.20 L12.78 7.63 L14.14 6.38 L15.22 7.46 L13.97 8.82Z" fill="#f0f070" stroke="#000" stroke-width="0.95" stroke-linejoin="round"/><circle cx="10.9" cy="10.7" r="1.5" fill="#f0f070" stroke="#000" stroke-width="1"/></svg>
<div class="t" style="left:21px;top:496px;">Источник</div>
<div class="t" style="left:375px;top:496px;">Управляе...</div>
<div class="t" style="left:448px;top:496px;">Работает</div>
<div class="t" style="left:533px;top:496px;">Вручную</div>
<div class="t" style="left:619px;top:496px;">Локальная сис...</div>
<svg style="left:4px;top:511px" width="16" height="16" viewBox="0 0 16 16" ><path d="M9.18 5.70 L10.89 6.40 L10.37 7.80 L8.62 7.23 L7.88 8.04 L8.59 9.74 L7.24 10.37 L6.39 8.73 L5.30 8.78 L4.60 10.49 L3.20 9.97 L3.77 8.22 L2.96 7.48 L1.26 8.19 L0.63 6.84 L2.27 5.99 L2.22 4.90 L0.51 4.20 L1.03 2.80 L2.78 3.37 L3.52 2.56 L2.81 0.86 L4.16 0.23 L5.01 1.87 L6.10 1.82 L6.80 0.11 L8.20 0.63 L7.63 2.38 L8.44 3.12 L10.14 2.41 L10.77 3.76 L9.13 4.61Z" fill="#fff" stroke="#000" stroke-width="0.95" stroke-linejoin="round"/><circle cx="5.7" cy="5.3" r="1.4" fill="#fff" stroke="#000" stroke-width="1"/><path d="M14.40 9.86 L16.25 9.94 L16.25 11.46 L14.40 11.54 L13.97 12.58 L15.22 13.94 L14.14 15.02 L12.78 13.77 L11.74 14.20 L11.66 16.05 L10.14 16.05 L10.06 14.20 L9.02 13.77 L7.66 15.02 L6.58 13.94 L7.83 12.58 L7.40 11.54 L5.55 11.46 L5.55 9.94 L7.40 9.86 L7.83 8.82 L6.58 7.46 L7.66 6.38 L9.02 7.63 L10.06 7.20 L10.14 5.35 L11.66 5.35 L11.74 7.20 L12.78 7.63 L14.14 6.38 L15.22 7.46 L13.97 8.82Z" fill="#f0f070" stroke="#000" stroke-width="0.95" stroke-linejoin="round"/><circle cx="10.9" cy="10.7" r="1.5" fill="#f0f070" stroke="#000" stroke-width="1"/></svg>
<div class="t" style="left:21px;top:513px;">Каталог</div>
<div class="t" style="left:375px;top:513px;">Позволяе...</div>
<div class="t" style="left:448px;top:513px;"></div>
<div class="t" style="left:533px;top:513px;">Вручную</div>
<div class="t" style="left:619px;top:513px;">Локальная сис...</div>
<svg style="left:4px;top:528px" width="16" height="16" viewBox="0 0 16 16" ><path d="M9.18 5.70 L10.89 6.40 L10.37 7.80 L8.62 7.23 L7.88 8.04 L8.59 9.74 L7.24 10.37 L6.39 8.73 L5.30 8.78 L4.60 10.49 L3.20 9.97 L3.77 8.22 L2.96 7.48 L1.26 8.19 L0.63 6.84 L2.27 5.99 L2.22 4.90 L0.51 4.20 L1.03 2.80 L2.78 3.37 L3.52 2.56 L2.81 0.86 L4.16 0.23 L5.01 1.87 L6.10 1.82 L6.80 0.11 L8.20 0.63 L7.63 2.38 L8.44 3.12 L10.14 2.41 L10.77 3.76 L9.13 4.61Z" fill="#fff" stroke="#000" stroke-width="0.95" stroke-linejoin="round"/><circle cx="5.7" cy="5.3" r="1.4" fill="#fff" stroke="#000" stroke-width="1"/><path d="M14.40 9.86 L16.25 9.94 L16.25 11.46 L14.40 11.54 L13.97 12.58 L15.22 13.94 L14.14 15.02 L12.78 13.77 L11.74 14.20 L11.66 16.05 L10.14 16.05 L10.06 14.20 L9.02 13.77 L7.66 15.02 L6.58 13.94 L7.83 12.58 L7.40 11.54 L5.55 11.46 L5.55 9.94 L7.40 9.86 L7.83 8.82 L6.58 7.46 L7.66 6.38 L9.02 7.63 L10.06 7.20 L10.14 5.35 L11.66 5.35 L11.74 7.20 L12.78 7.63 L14.14 6.38 L15.22 7.46 L13.97 8.82Z" fill="#f0f070" stroke="#000" stroke-width="0.95" stroke-linejoin="round"/><circle cx="10.9" cy="10.7" r="1.5" fill="#f0f070" stroke="#000" stroke-width="1"/></svg>
<div class="t" style="left:21px;top:530px;">Клиент</div>
<div class="t" style="left:375px;top:530px;">Позволяе...</div>
<div class="t" style="left:448px;top:530px;"></div>
<div class="t" style="left:533px;top:530px;letter-spacing:0.28px">Отключено</div>
<div class="t" style="left:619px;top:530px;">Локальная сис...</div>
<svg style="left:4px;top:545px" width="16" height="16" viewBox="0 0 16 16" ><path d="M9.18 5.70 L10.89 6.40 L10.37 7.80 L8.62 7.23 L7.88 8.04 L8.59 9.74 L7.24 10.37 L6.39 8.73 L5.30 8.78 L4.60 10.49 L3.20 9.97 L3.77 8.22 L2.96 7.48 L1.26 8.19 L0.63 6.84 L2.27 5.99 L2.22 4.90 L0.51 4.20 L1.03 2.80 L2.78 3.37 L3.52 2.56 L2.81 0.86 L4.16 0.23 L5.01 1.87 L6.10 1.82 L6.80 0.11 L8.20 0.63 L7.63 2.38 L8.44 3.12 L10.14 2.41 L10.77 3.76 L9.13 4.61Z" fill="#fff" stroke="#000" stroke-width="0.95" stroke-linejoin="round"/><circle cx="5.7" cy="5.3" r="1.4" fill="#fff" stroke="#000" stroke-width="1"/><path d="M14.40 9.86 L16.25 9.94 L16.25 11.46 L14.40 11.54 L13.97 12.58 L15.22 13.94 L14.14 15.02 L12.78 13.77 L11.74 14.20 L11.66 16.05 L10.14 16.05 L10.06 14.20 L9.02 13.77 L7.66 15.02 L6.58 13.94 L7.83 12.58 L7.40 11.54 L5.55 11.46 L5.55 9.94 L7.40 9.86 L7.83 8.82 L6.58 7.46 L7.66 6.38 L9.02 7.63 L10.06 7.20 L10.14 5.35 L11.66 5.35 L11.74 7.20 L12.78 7.63 L14.14 6.38 L15.22 7.46 L13.97 8.82Z" fill="#f0f070" stroke="#000" stroke-width="0.95" stroke-linejoin="round"/><circle cx="10.9" cy="10.7" r="1.5" fill="#f0f070" stroke="#000" stroke-width="1"/></svg>
<div class="t" style="left:21px;top:547px;">Компонент</div>
<div class="t" style="left:375px;top:547px;">Обеспечи...</div>
<div class="t" style="left:448px;top:547px;">Работает</div>
<div class="t" style="left:533px;top:547px;">Авто</div>
<div class="t" style="left:619px;top:547px;">Локальная сис...</div>
<svg style="left:4px;top:562px" width="16" height="16" viewBox="0 0 16 16" ><path d="M9.18 5.70 L10.89 6.40 L10.37 7.80 L8.62 7.23 L7.88 8.04 L8.59 9.74 L7.24 10.37 L6.39 8.73 L5.30 8.78 L4.60 10.49 L3.20 9.97 L3.77 8.22 L2.96 7.48 L1.26 8.19 L0.63 6.84 L2.27 5.99 L2.22 4.90 L0.51 4.20 L1.03 2.80 L2.78 3.37 L3.52 2.56 L2.81 0.86 L4.16 0.23 L5.01 1.87 L6.10 1.82 L6.80 0.11 L8.20 0.63 L7.63 2.38 L8.44 3.12 L10.14 2.41 L10.77 3.76 L9.13 4.61Z" fill="#fff" stroke="#000" stroke-width="0.95" stroke-linejoin="round"/><circle cx="5.7" cy="5.3" r="1.4" fill="#fff" stroke="#000" stroke-width="1"/><path d="M14.40 9.86 L16.25 9.94 L16.25 11.46 L14.40 11.54 L13.97 12.58 L15.22 13.94 L14.14 15.02 L12.78 13.77 L11.74 14.20 L11.66 16.05 L10.14 16.05 L10.06 14.20 L9.02 13.77 L7.66 15.02 L6.58 13.94 L7.83 12.58 L7.40 11.54 L5.55 11.46 L5.55 9.94 L7.40 9.86 L7.83 8.82 L6.58 7.46 L7.66 6.38 L9.02 7.63 L10.06 7.20 L10.14 5.35 L11.66 5.35 L11.74 7.20 L12.78 7.63 L14.14 6.38 L15.22 7.46 L13.97 8.82Z" fill="#f0f070" stroke="#000" stroke-width="0.95" stroke-linejoin="round"/><circle cx="10.9" cy="10.7" r="1.5" fill="#f0f070" stroke="#000" stroke-width="1"/></svg>
<div class="t" style="left:21px;top:564px;">Координатор</div>
<div class="t" style="left:375px;top:564px;">Предоста...</div>
<div class="t" style="left:448px;top:564px;"></div>
<div class="t" style="left:533px;top:564px;letter-spacing:0.28px">Отключено</div>
<div class="t" style="left:619px;top:564px;">Локальная сис...</div>
<svg style="left:4px;top:579px" width="16" height="16" viewBox="0 0 16 16" ><path d="M9.18 5.70 L10.89 6.40 L10.37 7.80 L8.62 7.23 L7.88 8.04 L8.59 9.74 L7.24 10.37 L6.39 8.73 L5.30 8.78 L4.60 10.49 L3.20 9.97 L3.77 8.22 L2.96 7.48 L1.26 8.19 L0.63 6.84 L2.27 5.99 L2.22 4.90 L0.51 4.20 L1.03 2.80 L2.78 3.37 L3.52 2.56 L2.81 0.86 L4.16 0.23 L5.01 1.87 L6.10 1.82 L6.80 0.11 L8.20 0.63 L7.63 2.38 L8.44 3.12 L10.14 2.41 L10.77 3.76 L9.13 4.61Z" fill="#fff" stroke="#000" stroke-width="0.95" stroke-linejoin="round"/><circle cx="5.7" cy="5.3" r="1.4" fill="#fff" stroke="#000" stroke-width="1"/><path d="M14.40 9.86 L16.25 9.94 L16.25 11.46 L14.40 11.54 L13.97 12.58 L15.22 13.94 L14.14 15.02 L12.78 13.77 L11.74 14.20 L11.66 16.05 L10.14 16.05 L10.06 14.20 L9.02 13.77 L7.66 15.02 L6.58 13.94 L7.83 12.58 L7.40 11.54 L5.55 11.46 L5.55 9.94 L7.40 9.86 L7.83 8.82 L6.58 7.46 L7.66 6.38 L9.02 7.63 L10.06 7.20 L10.14 5.35 L11.66 5.35 L11.74 7.20 L12.78 7.63 L14.14 6.38 L15.22 7.46 L13.97 8.82Z" fill="#f0f070" stroke="#000" stroke-width="0.95" stroke-linejoin="round"/><circle cx="10.9" cy="10.7" r="1.5" fill="#f0f070" stroke="#000" stroke-width="1"/></svg>
<div class="t" style="left:21px;top:581px;">Локатор</div>
<div class="t" style="left:375px;top:581px;">Позволяе...</div>
<div class="t" style="left:448px;top:581px;">Работает</div>
<div class="t" style="left:533px;top:581px;">Авто</div>
<div class="t" style="left:619px;top:581px;">Локальная сис...</div>
<svg style="left:4px;top:596px" width="16" height="16" viewBox="0 0 16 16" ><path d="M9.18 5.70 L10.89 6.40 L10.37 7.80 L8.62 7.23 L7.88 8.04 L8.59 9.74 L7.24 10.37 L6.39 8.73 L5.30 8.78 L4.60 10.49 L3.20 9.97 L3.77 8.22 L2.96 7.48 L1.26 8.19 L0.63 6.84 L2.27 5.99 L2.22 4.90 L0.51 4.20 L1.03 2.80 L2.78 3.37 L3.52 2.56 L2.81 0.86 L4.16 0.23 L5.01 1.87 L6.10 1.82 L6.80 0.11 L8.20 0.63 L7.63 2.38 L8.44 3.12 L10.14 2.41 L10.77 3.76 L9.13 4.61Z" fill="#fff" stroke="#000" stroke-width="0.95" stroke-linejoin="round"/><circle cx="5.7" cy="5.3" r="1.4" fill="#fff" stroke="#000" stroke-width="1"/><path d="M14.40 9.86 L16.25 9.94 L16.25 11.46 L14.40 11.54 L13.97 12.58 L15.22 13.94 L14.14 15.02 L12.78 13.77 L11.74 14.20 L11.66 16.05 L10.14 16.05 L10.06 14.20 L9.02 13.77 L7.66 15.02 L6.58 13.94 L7.83 12.58 L7.40 11.54 L5.55 11.46 L5.55 9.94 L7.40 9.86 L7.83 8.82 L6.58 7.46 L7.66 6.38 L9.02 7.63 L10.06 7.20 L10.14 5.35 L11.66 5.35 L11.74 7.20 L12.78 7.63 L14.14 6.38 L15.22 7.46 L13.97 8.82Z" fill="#f0f070" stroke="#000" stroke-width="0.95" stroke-linejoin="round"/><circle cx="10.9" cy="10.7" r="1.5" fill="#f0f070" stroke="#000" stroke-width="1"/></svg>
<div class="t" style="left:21px;top:598px;">Журналы и оповещения производительности</div>
<div class="t" style="left:375px;top:598px;">Управляе...</div>
<div class="t" style="left:448px;top:598px;"></div>
<div class="t" style="left:533px;top:598px;">Авто</div>
<div class="t" style="left:619px;top:598px;">Network Service</div>
<svg style="left:4px;top:613px" width="16" height="16" viewBox="0 0 16 16" ><path d="M9.18 5.70 L10.89 6.40 L10.37 7.80 L8.62 7.23 L7.88 8.04 L8.59 9.74 L7.24 10.37 L6.39 8.73 L5.30 8.78 L4.60 10.49 L3.20 9.97 L3.77 8.22 L2.96 7.48 L1.26 8.19 L0.63 6.84 L2.27 5.99 L2.22 4.90 L0.51 4.20 L1.03 2.80 L2.78 3.37 L3.52 2.56 L2.81 0.86 L4.16 0.23 L5.01 1.87 L6.10 1.82 L6.80 0.11 L8.20 0.63 L7.63 2.38 L8.44 3.12 L10.14 2.41 L10.77 3.76 L9.13 4.61Z" fill="#fff" stroke="#000" stroke-width="0.95" stroke-linejoin="round"/><circle cx="5.7" cy="5.3" r="1.4" fill="#fff" stroke="#000" stroke-width="1"/><path d="M14.40 9.86 L16.25 9.94 L16.25 11.46 L14.40 11.54 L13.97 12.58 L15.22 13.94 L14.14 15.02 L12.78 13.77 L11.74 14.20 L11.66 16.05 L10.14 16.05 L10.06 14.20 L9.02 13.77 L7.66 15.02 L6.58 13.94 L7.83 12.58 L7.40 11.54 L5.55 11.46 L5.55 9.94 L7.40 9.86 L7.83 8.82 L6.58 7.46 L7.66 6.38 L9.02 7.63 L10.06 7.20 L10.14 5.35 L11.66 5.35 L11.74 7.20 L12.78 7.63 L14.14 6.38 L15.22 7.46 L13.97 8.82Z" fill="#f0f070" stroke="#000" stroke-width="0.95" stroke-linejoin="round"/><circle cx="10.9" cy="10.7" r="1.5" fill="#f0f070" stroke="#000" stroke-width="1"/></svg>
<div class="t" style="left:21px;top:615px;">Запуск серверных процессов DCOM</div>
<div class="t" style="left:375px;top:615px;">Обеспечи...</div>
<div class="t" style="left:448px;top:615px;">Работает</div>
<div class="t" style="left:533px;top:615px;">Авто</div>
<div class="t" style="left:619px;top:615px;">Локальная сис...</div>
<svg style="left:4px;top:630px" width="16" height="16" viewBox="0 0 16 16" ><path d="M9.18 5.70 L10.89 6.40 L10.37 7.80 L8.62 7.23 L7.88 8.04 L8.59 9.74 L7.24 10.37 L6.39 8.73 L5.30 8.78 L4.60 10.49 L3.20 9.97 L3.77 8.22 L2.96 7.48 L1.26 8.19 L0.63 6.84 L2.27 5.99 L2.22 4.90 L0.51 4.20 L1.03 2.80 L2.78 3.37 L3.52 2.56 L2.81 0.86 L4.16 0.23 L5.01 1.87 L6.10 1.82 L6.80 0.11 L8.20 0.63 L7.63 2.38 L8.44 3.12 L10.14 2.41 L10.77 3.76 L9.13 4.61Z" fill="#fff" stroke="#000" stroke-width="0.95" stroke-linejoin="round"/><circle cx="5.7" cy="5.3" r="1.4" fill="#fff" stroke="#000" stroke-width="1"/><path d="M14.40 9.86 L16.25 9.94 L16.25 11.46 L14.40 11.54 L13.97 12.58 L15.22 13.94 L14.14 15.02 L12.78 13.77 L11.74 14.20 L11.66 16.05 L10.14 16.05 L10.06 14.20 L9.02 13.77 L7.66 15.02 L6.58 13.94 L7.83 12.58 L7.40 11.54 L5.55 11.46 L5.55 9.94 L7.40 9.86 L7.83 8.82 L6.58 7.46 L7.66 6.38 L9.02 7.63 L10.06 7.20 L10.14 5.35 L11.66 5.35 L11.74 7.20 L12.78 7.63 L14.14 6.38 L15.22 7.46 L13.97 8.82Z" fill="#f0f070" stroke="#000" stroke-width="0.95" stroke-linejoin="round"/><circle cx="10.9" cy="10.7" r="1.5" fill="#f0f070" stroke="#000" stroke-width="1"/></svg>
<div class="t" style="left:21px;top:632px;">Защищенное хранилище</div>
<div class="t" style="left:375px;top:632px;">Обеспечи...</div>
<div class="t" style="left:448px;top:632px;">Работает</div>
<div class="t" style="left:533px;top:632px;">Авто</div>
<div class="t" style="left:619px;top:632px;">Локальная сис...</div>
<svg style="left:4px;top:647px" width="16" height="16" viewBox="0 0 16 16" ><path d="M9.18 5.70 L10.89 6.40 L10.37 7.80 L8.62 7.23 L7.88 8.04 L8.59 9.74 L7.24 10.37 L6.39 8.73 L5.30 8.78 L4.60 10.49 L3.20 9.97 L3.77 8.22 L2.96 7.48 L1.26 8.19 L0.63 6.84 L2.27 5.99 L2.22 4.90 L0.51 4.20 L1.03 2.80 L2.78 3.37 L3.52 2.56 L2.81 0.86 L4.16 0.23 L5.01 1.87 L6.10 1.82 L6.80 0.11 L8.20 0.63 L7.63 2.38 L8.44 3.12 L10.14 2.41 L10.77 3.76 L9.13 4.61Z" fill="#fff" stroke="#000" stroke-width="0.95" stroke-linejoin="round"/><circle cx="5.7" cy="5.3" r="1.4" fill="#fff" stroke="#000" stroke-width="1"/><path d="M14.40 9.86 L16.25 9.94 L16.25 11.46 L14.40 11.54 L13.97 12.58 L15.22 13.94 L14.14 15.02 L12.78 13.77 L11.74 14.20 L11.66 16.05 L10.14 16.05 L10.06 14.20 L9.02 13.77 L7.66 15.02 L6.58 13.94 L7.83 12.58 L7.40 11.54 L5.55 11.46 L5.55 9.94 L7.40 9.86 L7.83 8.82 L6.58 7.46 L7.66 6.38 L9.02 7.63 L10.06 7.20 L10.14 5.35 L11.66 5.35 L11.74 7.20 L12.78 7.63 L14.14 6.38 L15.22 7.46 L13.97 8.82Z" fill="#f0f070" stroke="#000" stroke-width="0.95" stroke-linejoin="round"/><circle cx="10.9" cy="10.7" r="1.5" fill="#f0f070" stroke="#000" stroke-width="1"/></svg>
<div class="t" style="left:21px;top:649px;">Инструментарий управления Windows</div>
<div class="t" style="left:375px;top:649px;">Предоста...</div>
<div class="t" style="left:448px;top:649px;">Работает</div>
<div class="t" style="left:533px;top:649px;">Авто</div>
<div class="t" style="left:619px;top:649px;">Локальная сис...</div>
<svg style="left:4px;top:664px" width="16" height="16" viewBox="0 0 16 16" ><path d="M9.18 5.70 L10.89 6.40 L10.37 7.80 L8.62 7.23 L7.88 8.04 L8.59 9.74 L7.24 10.37 L6.39 8.73 L5.30 8.78 L4.60 10.49 L3.20 9.97 L3.77 8.22 L2.96 7.48 L1.26 8.19 L0.63 6.84 L2.27 5.99 L2.22 4.90 L0.51 4.20 L1.03 2.80 L2.78 3.37 L3.52 2.56 L2.81 0.86 L4.16 0.23 L5.01 1.87 L6.10 1.82 L6.80 0.11 L8.20 0.63 L7.63 2.38 L8.44 3.12 L10.14 2.41 L10.77 3.76 L9.13 4.61Z" fill="#fff" stroke="#000" stroke-width="0.95" stroke-linejoin="round"/><circle cx="5.7" cy="5.3" r="1.4" fill="#fff" stroke="#000" stroke-width="1"/><path d="M14.40 9.86 L16.25 9.94 L16.25 11.46 L14.40 11.54 L13.97 12.58 L15.22 13.94 L14.14 15.02 L12.78 13.77 L11.74 14.20 L11.66 16.05 L10.14 16.05 L10.06 14.20 L9.02 13.77 L7.66 15.02 L6.58 13.94 L7.83 12.58 L7.40 11.54 L5.55 11.46 L5.55 9.94 L7.40 9.86 L7.83 8.82 L6.58 7.46 L7.66 6.38 L9.02 7.63 L10.06 7.20 L10.14 5.35 L11.66 5.35 L11.74 7.20 L12.78 7.63 L14.14 6.38 L15.22 7.46 L13.97 8.82Z" fill="#f0f070" stroke="#000" stroke-width="0.95" stroke-linejoin="round"/><circle cx="10.9" cy="10.7" r="1.5" fill="#f0f070" stroke="#000" stroke-width="1"/></svg>
<div class="t" style="left:21px;top:666px;">Источник бесперебойного питания</div>
<div class="t" style="left:375px;top:666px;">Управляе...</div>
<div class="t" style="left:448px;top:666px;"></div>
<div class="t" style="left:533px;top:666px;">Вручную</div>
<div class="t" style="left:619px;top:666px;">Local Service</div>
<svg style="left:4px;top:681px" width="16" height="16" viewBox="0 0 16 16" ><path d="M9.18 5.70 L10.89 6.40 L10.37 7.80 L8.62 7.23 L7.88 8.04 L8.59 9.74 L7.24 10.37 L6.39 8.73 L5.30 8.78 L4.60 10.49 L3.20 9.97 L3.77 8.22 L2.96 7.48 L1.26 8.19 L0.63 6.84 L2.27 5.99 L2.22 4.90 L0.51 4.20 L1.03 2.80 L2.78 3.37 L3.52 2.56 L2.81 0.86 L4.16 0.23 L5.01 1.87 L6.10 1.82 L6.80 0.11 L8.20 0.63 L7.63 2.38 L8.44 3.12 L10.14 2.41 L10.77 3.76 L9.13 4.61Z" fill="#fff" stroke="#000" stroke-width="0.95" stroke-linejoin="round"/><circle cx="5.7" cy="5.3" r="1.4" fill="#fff" stroke="#000" stroke-width="1"/><path d="M14.40 9.86 L16.25 9.94 L16.25 11.46 L14.40 11.54 L13.97 12.58 L15.22 13.94 L14.14 15.02 L12.78 13.77 L11.74 14.20 L11.66 16.05 L10.14 16.05 L10.06 14.20 L9.02 13.77 L7.66 15.02 L6.58 13.94 L7.83 12.58 L7.40 11.54 L5.55 11.46 L5.55 9.94 L7.40 9.86 L7.83 8.82 L6.58 7.46 L7.66 6.38 L9.02 7.63 L10.06 7.20 L10.14 5.35 L11.66 5.35 L11.74 7.20 L12.78 7.63 L14.14 6.38 L15.22 7.46 L13.97 8.82Z" fill="#f0f070" stroke="#000" stroke-width="0.95" stroke-linejoin="round"/><circle cx="10.9" cy="10.7" r="1.5" fill="#f0f070" stroke="#000" stroke-width="1"/></svg>
<div class="t" style="left:21px;top:683px;">Каталог сеанса служб терминалов</div>
<div class="t" style="left:375px;top:683px;">Позволяе...</div>
<div class="t" style="left:448px;top:683px;"></div>
<div class="t" style="left:533px;top:683px;letter-spacing:0.28px">Отключено</div>
<div class="t" style="left:619px;top:683px;">Локальная сис...</div>
<svg style="left:4px;top:698px" width="16" height="16" viewBox="0 0 16 16" ><path d="M9.18 5.70 L10.89 6.40 L10.37 7.80 L8.62 7.23 L7.88 8.04 L8.59 9.74 L7.24 10.37 L6.39 8.73 L5.30 8.78 L4.60 10.49 L3.20 9.97 L3.77 8.22 L2.96 7.48 L1.26 8.19 L0.63 6.84 L2.27 5.99 L2.22 4.90 L0.51 4.20 L1.03 2.80 L2.78 3.37 L3.52 2.56 L2.81 0.86 L4.16 0.23 L5.01 1.87 L6.10 1.82 L6.80 0.11 L8.20 0.63 L7.63 2.38 L8.44 3.12 L10.14 2.41 L10.77 3.76 L9.13 4.61Z" fill="#fff" stroke="#000" stroke-width="0.95" stroke-linejoin="round"/><circle cx="5.7" cy="5.3" r="1.4" fill="#fff" stroke="#000" stroke-width="1"/><path d="M14.40 9.86 L16.25 9.94 L16.25 11.46 L14.40 11.54 L13.97 12.58 L15.22 13.94 L14.14 15.02 L12.78 13.77 L11.74 14.20 L11.66 16.05 L10.14 16.05 L10.06 14.20 L9.02 13.77 L7.66 15.02 L6.58 13.94 L7.83 12.58 L7.40 11.54 L5.55 11.46 L5.55 9.94 L7.40 9.86 L7.83 8.82 L6.58 7.46 L7.66 6.38 L9.02 7.63 L10.06 7.20 L10.14 5.35 L11.66 5.35 L11.74 7.20 L12.78 7.63 L14.14 6.38 L15.22 7.46 L13.97 8.82Z" fill="#f0f070" stroke="#000" stroke-width="0.95" stroke-linejoin="round"/><circle cx="10.9" cy="10.7" r="1.5" fill="#f0f070" stroke="#000" stroke-width="1"/></svg>
<div class="t" style="left:21px;top:700px;">Клиент отслеживания изменившихся связей</div>
<div class="t" style="left:375px;top:700px;">Позволяе...</div>
<div class="t" style="left:448px;top:700px;">Работает</div>
<div class="t" style="left:533px;top:700px;">Авто</div>
<div class="t" style="left:619px;top:700px;">Локальная сис...</div>
<svg style="left:4px;top:715px" width="16" height="16" viewBox="0 0 16 16" ><path d="M9.18 5.70 L10.89 6.40 L10.37 7.80 L8.62 7.23 L7.88 8.04 L8.59 9.74 L7.24 10.37 L6.39 8.73 L5.30 8.78 L4.60 10.49 L3.20 9.97 L3.77 8.22 L2.96 7.48 L1.26 8.19 L0.63 6.84 L2.27 5.99 L2.22 4.90 L0.51 4.20 L1.03 2.80 L2.78 3.37 L3.52 2.56 L2.81 0.86 L4.16 0.23 L5.01 1.87 L6.10 1.82 L6.80 0.11 L8.20 0.63 L7.63 2.38 L8.44 3.12 L10.14 2.41 L10.77 3.76 L9.13 4.61Z" fill="#fff" stroke="#000" stroke-width="0.95" stroke-linejoin="round"/><circle cx="5.7" cy="5.3" r="1.4" fill="#fff" stroke="#000" stroke-width="1"/><path d="M14.40 9.86 L16.25 9.94 L16.25 11.46 L14.40 11.54 L13.97 12.58 L15.22 13.94 L14.14 15.02 L12.78 13.77 L11.74 14.20 L11.66 16.05 L10.14 16.05 L10.06 14.20 L9.02 13.77 L7.66 15.02 L6.58 13.94 L7.83 12.58 L7.40 11.54 L5.55 11.46 L5.55 9.94 L7.40 9.86 L7.83 8.82 L6.58 7.46 L7.66 6.38 L9.02 7.63 L10.06 7.20 L10.14 5.35 L11.66 5.35 L11.74 7.20 L12.78 7.63 L14.14 6.38 L15.22 7.46 L13.97 8.82Z" fill="#f0f070" stroke="#000" stroke-width="0.95" stroke-linejoin="round"/><circle cx="10.9" cy="10.7" r="1.5" fill="#f0f070" stroke="#000" stroke-width="1"/></svg>
<div class="t" style="left:21px;top:717px;">Компонент драйверов пользовательского режима Windows</div>
<div class="t" style="left:375px;top:717px;">Включен...</div>
<div class="t" style="left:448px;top:717px;"></div>
<div class="t" style="left:533px;top:717px;">Вручную</div>
<div class="t" style="left:619px;top:717px;">Local Service</div>
<svg style="left:4px;top:732px" width="16" height="16" viewBox="0 0 16 16" ><path d="M9.18 5.70 L10.89 6.40 L10.37 7.80 L8.62 7.23 L7.88 8.04 L8.59 9.74 L7.24 10.37 L6.39 8.73 L5.30 8.78 L4.60 10.49 L3.20 9.97 L3.77 8.22 L2.96 7.48 L1.26 8.19 L0.63 6.84 L2.27 5.99 L2.22 4.90 L0.51 4.20 L1.03 2.80 L2.78 3.37 L3.52 2.56 L2.81 0.86 L4.16 0.23 L5.01 1.87 L6.10 1.82 L6.80 0.11 L8.20 0.63 L7.63 2.38 L8.44 3.12 L10.14 2.41 L10.77 3.76 L9.13 4.61Z" fill="#fff" stroke="#000" stroke-width="0.95" stroke-linejoin="round"/><circle cx="5.7" cy="5.3" r="1.4" fill="#fff" stroke="#000" stroke-width="1"/><path d="M14.40 9.86 L16.25 9.94 L16.25 11.46 L14.40 11.54 L13.97 12.58 L15.22 13.94 L14.14 15.02 L12.78 13.77 L11.74 14.20 L11.66 16.05 L10.14 16.05 L10.06 14.20 L9.02 13.77 L7.66 15.02 L6.58 13.94 L7.83 12.58 L7.40 11.54 L5.55 11.46 L5.55 9.94 L7.40 9.86 L7.83 8.82 L6.58 7.46 L7.66 6.38 L9.02 7.63 L10.06 7.20 L10.14 5.35 L11.66 5.35 L11.74 7.20 L12.78 7.63 L14.14 6.38 L15.22 7.46 L13.97 8.82Z" fill="#f0f070" stroke="#000" stroke-width="0.95" stroke-linejoin="round"/><circle cx="10.9" cy="10.7" r="1.5" fill="#f0f070" stroke="#000" stroke-width="1"/></svg>
<div class="t" style="left:21px;top:734px;">Координатор распределенных транзакций</div>
<div class="t" style="left:375px;top:734px;">Координа...</div>
<div class="t" style="left:448px;top:734px;">Работает</div>
<div class="t" style="left:533px;top:734px;">Авто</div>
<div class="t" style="left:619px;top:734px;">Network Service</div>
<svg style="left:4px;top:749px" width="16" height="16" viewBox="0 0 16 16" ><path d="M9.18 5.70 L10.89 6.40 L10.37 7.80 L8.62 7.23 L7.88 8.04 L8.59 9.74 L7.24 10.37 L6.39 8.73 L5.30 8.78 L4.60 10.49 L3.20 9.97 L3.77 8.22 L2.96 7.48 L1.26 8.19 L0.63 6.84 L2.27 5.99 L2.22 4.90 L0.51 4.20 L1.03 2.80 L2.78 3.37 L3.52 2.56 L2.81 0.86 L4.16 0.23 L5.01 1.87 L6.10 1.82 L6.80 0.11 L8.20 0.63 L7.63 2.38 L8.44 3.12 L10.14 2.41 L10.77 3.76 L9.13 4.61Z" fill="#fff" stroke="#000" stroke-width="0.95" stroke-linejoin="round"/><circle cx="5.7" cy="5.3" r="1.4" fill="#fff" stroke="#000" stroke-width="1"/><path d="M14.40 9.86 L16.25 9.94 L16.25 11.46 L14.40 11.54 L13.97 12.58 L15.22 13.94 L14.14 15.02 L12.78 13.77 L11.74 14.20 L11.66 16.05 L10.14 16.05 L10.06 14.20 L9.02 13.77 L7.66 15.02 L6.58 13.94 L7.83 12.58 L7.40 11.54 L5.55 11.46 L5.55 9.94 L7.40 9.86 L7.83 8.82 L6.58 7.46 L7.66 6.38 L9.02 7.63 L10.06 7.20 L10.14 5.35 L11.66 5.35 L11.74 7.20 L12.78 7.63 L14.14 6.38 L15.22 7.46 L13.97 8.82Z" fill="#f0f070" stroke="#000" stroke-width="0.95" stroke-linejoin="round"/><circle cx="10.9" cy="10.7" r="1.5" fill="#f0f070" stroke="#000" stroke-width="1"/></svg>
<div class="t" style="left:21px;top:751px;">Локатор удаленного вызова процедур (RPC)</div>
<div class="t" style="left:375px;top:751px;">Позволяе...</div>
<div class="t" style="left:448px;top:751px;"></div>
<div class="t" style="left:533px;top:751px;">Вручную</div>
<div class="t" style="left:619px;top:751px;">Network Service</div>
<svg style="left:4px;top:766px" width="16" height="16" viewBox="0 0 16 16" ><path d="M9.18 5.70 L10.89 6.40 L10.37 7.80 L8.62 7.23 L7.88 8.04 L8.59 9.74 L7.24 10.37 L6.39 8.73 L5.30 8.78 L4.60 10.49 L3.20 9.97 L3.77 8.22 L2.96 7.48 L1.26 8.19 L0.63 6.84 L2.27 5.99 L2.22 4.90 L0.51 4.20 L1.03 2.80 L2.78 3.37 L3.52 2.56 L2.81 0.86 L4.16 0.23 L5.01 1.87 L6.10 1.82 L6.80 0.11 L8.20 0.63 L7.63 2.38 L8.44 3.12 L10.14 2.41 L10.77 3.76 L9.13 4.61Z" fill="#fff" stroke="#000" stroke-width="0.95" stroke-linejoin="round"/><circle cx="5.7" cy="5.3" r="1.4" fill="#fff" stroke="#000" stroke-width="1"/><path d="M14.40 9.86 L16.25 9.94 L16.25 11.46 L14.40 11.54 L13.97 12.58 L15.22 13.94 L14.14 15.02 L12.78 13.77 L11.74 14.20 L11.66 16.05 L10.14 16.05 L10.06 14.20 L9.02 13.77 L7.66 15.02 L6.58 13.94 L7.83 12.58 L7.40 11.54 L5.55 11.46 L5.55 9.94 L7.40 9.86 L7.83 8.82 L6.58 7.46 L7.66 6.38 L9.02 7.63 L10.06 7.20 L10.14 5.35 L11.66 5.35 L11.74 7.20 L12.78 7.63 L14.14 6.38 L15.22 7.46 L13.97 8.82Z" fill="#f0f070" stroke="#000" stroke-width="0.95" stroke-linejoin="round"/><circle cx="10.9" cy="10.7" r="1.5" fill="#f0f070" stroke="#000" stroke-width="1"/></svg>
<div class="t" style="left:21px;top:768px;">Маршрутизация и удаленный доступ</div>
<div class="t" style="left:375px;top:768px;">Настройк...</div>
<div class="t" style="left:448px;top:768px;"></div>
<div class="t" style="left:533px;top:768px;letter-spacing:0.28px">Отключено</div>
<div class="t" style="left:619px;top:768px;">Локальная сис...</div>
<svg style="left:4px;top:783px" width="16" height="16" viewBox="0 0 16 16" ><path d="M9.18 5.70 L10.89 6.40 L10.37 7.80 L8.62 7.23 L7.88 8.04 L8.59 9.74 L7.24 10.37 L6.39 8.73 L5.30 8.78 L4.60 10.49 L3.20 9.97 L3.77 8.22 L2.96 7.48 L1.26 8.19 L0.63 6.84 L2.27 5.99 L2.22 4.90 L0.51 4.20 L1.03 2.80 L2.78 3.37 L3.52 2.56 L2.81 0.86 L4.16 0.23 L5.01 1.87 L6.10 1.82 L6.80 0.11 L8.20 0.63 L7.63 2.38 L8.44 3.12 L10.14 2.41 L10.77 3.76 L9.13 4.61Z" fill="#fff" stroke="#000" stroke-width="0.95" stroke-linejoin="round"/><circle cx="5.7" cy="5.3" r="1.4" fill="#fff" stroke="#000" stroke-width="1"/><path d="M14.40 9.86 L16.25 9.94 L16.25 11.46 L14.40 11.54 L13.97 12.58 L15.22 13.94 L14.14 15.02 L12.78 13.77 L11.74 14.20 L11.66 16.05 L10.14 16.05 L10.06 14.20 L9.02 13.77 L7.66 15.02 L6.58 13.94 L7.83 12.58 L7.40 11.54 L5.55 11.46 L5.55 9.94 L7.40 9.86 L7.83 8.82 L6.58 7.46 L7.66 6.38 L9.02 7.63 L10.06 7.20 L10.14 5.35 L11.66 5.35 L11.74 7.20 L12.78 7.63 L14.14 6.38 L15.22 7.46 L13.97 8.82Z" fill="#f0f070" stroke="#000" stroke-width="0.95" stroke-linejoin="round"/><circle cx="10.9" cy="10.7" r="1.5" fill="#f0f070" stroke="#000" stroke-width="1"/></svg>
<div class="t" style="left:21px;top:785px;">Модуль поддержки NetBIOS через TCP/IP</div>
<div class="t" style="left:375px;top:785px;">Включае...</div>
<div class="t" style="left:448px;top:785px;">Работает</div>
<div class="t" style="left:533px;top:785px;">Авто</div>
<div class="t" style="left:619px;top:785px;">Local Service</div>
<svg style="left:4px;top:800px" width="16" height="16" viewBox="0 0 16 16" ><path d="M9.18 5.70 L10.89 6.40 L10.37 7.80 L8.62 7.23 L7.88 8.04 L8.59 9.74 L7.24 10.37 L6.39 8.73 L5.30 8.78 L4.60 10.49 L3.20 9.97 L3.77 8.22 L2.96 7.48 L1.26 8.19 L0.63 6.84 L2.27 5.99 L2.22 4.90 L0.51 4.20 L1.03 2.80 L2.78 3.37 L3.52 2.56 L2.81 0.86 L4.16 0.23 L5.01 1.87 L6.10 1.82 L6.80 0.11 L8.20 0.63 L7.63 2.38 L8.44 3.12 L10.14 2.41 L10.77 3.76 L9.13 4.61Z" fill="#fff" stroke="#000" stroke-width="0.95" stroke-linejoin="round"/><circle cx="5.7" cy="5.3" r="1.4" fill="#fff" stroke="#000" stroke-width="1"/><path d="M14.40 9.86 L16.25 9.94 L16.25 11.46 L14.40 11.54 L13.97 12.58 L15.22 13.94 L14.14 15.02 L12.78 13.77 L11.74 14.20 L11.66 16.05 L10.14 16.05 L10.06 14.20 L9.02 13.77 L7.66 15.02 L6.58 13.94 L7.83 12.58 L7.40 11.54 L5.55 11.46 L5.55 9.94 L7.40 9.86 L7.83 8.82 L6.58 7.46 L7.66 6.38 L9.02 7.63 L10.06 7.20 L10.14 5.35 L11.66 5.35 L11.74 7.20 L12.78 7.63 L14.14 6.38 L15.22 7.46 L13.97 8.82Z" fill="#f0f070" stroke="#000" stroke-width="0.95" stroke-linejoin="round"/><circle cx="10.9" cy="10.7" r="1.5" fill="#f0f070" stroke="#000" stroke-width="1"/></svg>
<div class="t" style="left:21px;top:802px;">Модуль поддержки специальной консоли администрирования</div>
<div class="t" style="left:375px;top:802px;">Предоста...</div>
<div class="t" style="left:448px;top:802px;"></div>
<div class="t" style="left:533px;top:802px;">Вручную</div>
<div class="t" style="left:619px;top:802px;">Локальная сис...</div>
<svg style="left:4px;top:817px" width="16" height="16" viewBox="0 0 16 16" ><path d="M9.18 5.70 L10.89 6.40 L10.37 7.80 L8.62 7.23 L7.88 8.04 L8.59 9.74 L7.24 10.37 L6.39 8.73 L5.30 8.78 L4.60 10.49 L3.20 9.97 L3.77 8.22 L2.96 7.48 L1.26 8.19 L0.63 6.84 L2.27 5.99 L2.22 4.90 L0.51 4.20 L1.03 2.80 L2.78 3.37 L3.52 2.56 L2.81 0.86 L4.16 0.23 L5.01 1.87 L6.10 1.82 L6.80 0.11 L8.20 0.63 L7.63 2.38 L8.44 3.12 L10.14 2.41 L10.77 3.76 L9.13 4.61Z" fill="#fff" stroke="#000" stroke-width="0.95" stroke-linejoin="round"/><circle cx="5.7" cy="5.3" r="1.4" fill="#fff" stroke="#000" stroke-width="1"/><path d="M14.40 9.86 L16.25 9.94 L16.25 11.46 L14.40 11.54 L13.97 12.58 L15.22 13.94 L14.14 15.02 L12.78 13.77 L11.74 14.20 L11.66 16.05 L10.14 16.05 L10.06 14.20 L9.02 13.77 L7.66 15.02 L6.58 13.94 L7.83 12.58 L7.40 11.54 L5.55 11.46 L5.55 9.94 L7.40 9.86 L7.83 8.82 L6.58 7.46 L7.66 6.38 L9.02 7.63 L10.06 7.20 L10.14 5.35 L11.66 5.35 L11.74 7.20 L12.78 7.63 L14.14 6.38 L15.22 7.46 L13.97 8.82Z" fill="#f0f070" stroke="#000" stroke-width="0.95" stroke-linejoin="round"/><circle cx="10.9" cy="10.7" r="1.5" fill="#f0f070" stroke="#000" stroke-width="1"/></svg>
<div class="t" style="left:21px;top:819px;">Обозреватель компьютеров</div>
<div class="t" style="left:375px;top:819px;">Обслужи...</div>
<div class="t" style="left:448px;top:819px;">Работает</div>
<div class="t" style="left:533px;top:819px;">Авто</div>
<div class="t" style="left:619px;top:819px;">Локальная сис...</div>
</div>
<div class="chk" style="left:1262px;top:108px;width:16px;height:848px;"></div>
<div class="raised" style="left:1262px;top:108px;width:16px;height:16px;"></div>
<svg style="left:1262px;top:108px" width="16" height="16" viewBox="0 0 16 16" ><path d="M8 5l-4 4h8z" fill="#000"/></svg>
<div class="raised" style="left:1262px;top:124px;width:16px;height:407px;"></div>
<div class="raised" style="left:1262px;top:940px;width:16px;height:16px;"></div>
<svg style="left:1262px;top:940px" width="16" height="16" viewBox="0 0 16 16" ><path d="M8 11l-4-4h8z" fill="#000"/></svg>
<svg style="left:203px;top:956px" width="1077" height="20" viewBox="0 0 1077 20" ><rect x="0" y="0" width="1075" height="19" fill="#d4d0c8"/><rect x="2" y="0" width="1073" height="1" fill="#fff"/><path d="M96 1.5H1075" stroke="#000"/><path d="M96 2L192 2L184 17.5H98Z" fill="#d4d0c8" stroke="#000"/><path d="M0.5 0.5L8 17.5H91L98 1.5" fill="#fff" stroke="#000"/><rect x="1" y="0" width="96" height="1.5" fill="#fff"/></svg>
<div class="t" style="left:217px;top:960px;">Расширенный</div>
<div class="t" style="left:308px;top:960px;">Стандартный</div>
<div class="thin" style="left:0px;top:976px;width:1060px;height:17px;"></div>
<div class="thin" style="left:1062px;top:976px;width:131px;height:17px;"></div>
<div class="thin" style="left:1195px;top:976px;width:83px;height:17px;"></div>
<div style="left:0px;top:994px;width:1280px;height:30px;background:#d4d0c8;box-shadow:inset 0 1px #d4d0c8,inset 0 2px #fff"></div>
<div class="raised" style="left:2px;top:998px;width:51px;height:22px;"></div>
<svg style="left:4px;top:1000px" width="16" height="16" viewBox="0 0 16 16" ><path d="M1 3q3-2 6 0v5q-3-2-6 0z" fill="#e85820"/><path d="M8 3q3 2 6 0v5q-3 2-6 0z" fill="#60c020"/><path d="M1 9q3-2 6 0v5q-3-2-6 0z" fill="#3070e0"/><path d="M8 9q3 2 6 0v5q-3 2-6 0z" fill="#f0c820"/></svg>
<div class="t b" style="left:22px;top:1003px;">Пуск</div>
<svg style="left:62px;top:1002px" width="16" height="16" viewBox="0 0 16 16" ><path d="M14 9.5H5.5Q6 5.5 9 5.5T12.5 8H15Q14.5 2.5 9 2.5Q3 2.5 2.5 9Q2.5 15 9 15Q13.5 15 14.8 11.5H12Q11 12.8 9 12.8Q5.8 12.8 5.5 9.5Z" fill="#2a7ad8" stroke="#104a98" stroke-width=".6"/><path d="M5.6 7.6H12.4" stroke="#fff" stroke-width="1.2"/><path d="M1.5 14.5Q-0.5 11 6 5Q12 0 14.5 1.5" stroke="#f0c030" stroke-width="1.5" fill="none"/><path d="M3 12Q2 9 7 5" stroke="#60c040" stroke-width=".8" fill="none"/></svg>
<svg style="left:84px;top:1002px" width="16" height="16" viewBox="0 0 16 16" ><path d="M2 3Q2 1.5 3.5 1.5H12.5L14.5 3.5V13Q14.5 15 12.5 15H3.5Q2 15 2 13Z" fill="#fff" stroke="#1a5aa0" stroke-width="1.6"/><path d="M5 5h5v6h-5z" fill="none" stroke="#3a80d0" stroke-width="1.4"/><path d="M7.5 8l4-3" stroke="#000" stroke-width="1"/><path d="M14 6l2 2-2 2z" fill="#803030"/></svg>
<svg style="left:107px;top:1002px" width="16" height="16" viewBox="0 0 16 16" ><circle cx="8" cy="8.5" r="6.8" fill="#2a60b0"/><path d="M7 3q2 2 1 5-1 2 1 3" stroke="#70b0e8" stroke-width="1.5" fill="none"/><path d="M3 4Q0 9 3 13Q7 17 12 14.5Q15 12.5 15 9Q13 13 9 13Q4 12.5 4.5 8Q5 6 3 4Z" fill="#e87010"/><path d="M3 4Q5 2 8 2Q12 2 14 5Q11 3.5 8 4Q5 5 4.5 8Z" fill="#f0a020"/></svg>
<svg style="left:130px;top:1002px" width="16" height="16" viewBox="0 0 16 16" ><circle cx="8" cy="8" r="7.3" fill="#fff" stroke="#b06060" stroke-width=".8"/><circle cx="8" cy="8" r="5.8" fill="#a01010"/><path d="M3 10Q4 6 6 5Q6 8 8 6Q9 4 10 5Q10 8 12 6Q13 8 13 10Q11 13.5 8 13.5Q5 13.5 3 10Z" fill="#f0a818"/><path d="M4 11Q8 9 12 11Q10 13 8 13Q6 13 4 11Z" fill="#f8e040"/></svg>
<div class="raised" style="left:202px;top:998px;width:155px;height:22px;"></div>
<div class="t" style="left:226px;top:1003px;">C:\</div>
<svg style="left:207px;top:1002px" width="16" height="16" viewBox="0 0 16 16" ><path d="M1 9l5-4h9v4l-5 4h-9z" fill="#c8c8c8" stroke="#808080" stroke-width=".8"/><path d="M1 9h9l5-4M10 9v4" stroke="#606060" fill="none" stroke-width=".8"/><rect x="11" y="8" width="2" height="1" fill="#404040"/></svg>
<div class="raised" style="left:361px;top:998px;width:155px;height:22px;"></div>
<div class="t" style="left:385px;top:1003px;">Администрирование E...</div>
<svg style="left:366px;top:1002px" width="16" height="16" viewBox="0 0 16 16" ><path d="M2 14l7-7" stroke="#000" stroke-width="3.5"/><path d="M2 14l7-7" stroke="#fff" stroke-width="1.5"/><circle cx="11" cy="5" r="4" fill="#fff" stroke="#000" stroke-width="1.2"/><path d="M11 1l2 4 3-1" stroke="#d4d0c8" stroke-width="2.5" fill="none"/></svg>
<div class="raised" style="left:520px;top:998px;width:156px;height:22px;"></div>
<div class="t" style="left:544px;top:1003px;">Создать новую тему - ...</div>
<svg style="left:525px;top:1002px" width="16" height="16" viewBox="0 0 16 16" ><circle cx="8" cy="8.5" r="6.8" fill="#2a60b0"/><path d="M7 3q2 2 1 5-1 2 1 3" stroke="#70b0e8" stroke-width="1.5" fill="none"/><path d="M3 4Q0 9 3 13Q7 17 12 14.5Q15 12.5 15 9Q13 13 9 13Q4 12.5 4.5 8Q5 6 3 4Z" fill="#e87010"/><path d="M3 4Q5 2 8 2Q12 2 14 5Q11 3.5 8 4Q5 5 4.5 8Z" fill="#f0a020"/></svg>
<div class="sunk chk" style="left:679px;top:998px;width:157px;height:22px;background:#fff"></div>
<div class="t b" style="left:703px;top:1003px;">Управление компью...</div>
<svg style="left:685px;top:1003px" width="16" height="16" viewBox="0 0 16 16" ><rect x="2" y="1" width="12" height="9" fill="#f4f4f4"/><rect x="4" y="3" width="8" height="5" fill="#0000d0" stroke="#000" stroke-width="0.8"/><rect x="14" y="1" width="1" height="9" fill="#000"/><rect x="1" y="10" width="14" height="1" fill="#000"/><rect x="1" y="11" width="14" height="4" fill="#eee"/><rect x="1" y="15" width="14" height="1" fill="#000"/><rect x="15" y="10" width="1" height="5" fill="#000"/><rect x="8" y="12" width="5" height="1" fill="#000"/></svg>
<div class="raised" style="left:840px;top:998px;width:156px;height:22px;"></div>
<div class="t" style="left:864px;top:1003px;">Редактор объектов гр...</div>
<svg style="left:845px;top:1002px" width="16" height="16" viewBox="0 0 16 16" ><path d="M1 5l6-3 4 4" stroke="#606060" stroke-width="1.8" fill="none"/><path d="M5 3l8 2" stroke="#a0a0a0" stroke-width="2"/><rect x="5" y="7" width="9" height="8" fill="#f0e020" stroke="#000" stroke-width=".8"/><path d="M8 9v5M11 9v5" stroke="#000"/></svg>
<div style="left:1007px;top:1002px;width:13px;height:15px;background:#1a3070"></div>
<div class="t" style="left:1008px;top:1003px;color:#fff;font-size:11px;letter-spacing:-1px;width:12px;overflow:hidden">EN</div>
<div class="t" style="left:1026px;top:1003px;">EWA net</div>
<div class="t" style="left:1076px;top:999px;font-weight:bold;font-size:12px">»</div>
<div class="thin" style="left:1089px;top:998px;width:189px;height:23px;"></div>
<svg style="left:1092px;top:1002px" width="16" height="16" viewBox="0 0 16 16" ><circle cx="8" cy="8" r="7" fill="#c8c8e8" stroke="#606080"/><path d="M9 2l-4 7h3l-2 5 5-7h-3z" fill="#3040b0"/></svg>
<svg style="left:1111px;top:1002px" width="16" height="16" viewBox="0 0 16 16" ><path d="M1 5h4l5-4v14l-5-4h-4z" fill="#e07030" stroke="#000" stroke-width=".8"/><path d="M12 4q2 4 0 8M14 2q3 6 0 12" stroke="#000" fill="none"/></svg>
<svg style="left:1128px;top:1002px" width="16" height="16" viewBox="0 0 16 16" ><rect x="0" y="0" width="16" height="16" fill="#20a070"/><circle cx="8" cy="8" r="6" fill="#fff"/><circle cx="8" cy="8" r="4" fill="#20a070"/><circle cx="8" cy="8" r="2" fill="#000"/></svg>
<svg style="left:1146px;top:1002px" width="16" height="16" viewBox="0 0 16 16" ><circle cx="8" cy="8" r="7.5" fill="#40a0a0"/><path d="M3 8a5 5 0 0 1 10 0" fill="#fff" opacity=".5"/><path d="M5 12V4l6 8V4" stroke="#fff" stroke-width="2" fill="none"/></svg>
<svg style="left:1164px;top:1001px" width="17" height="18" viewBox="0 0 17 18" ><rect x="0.5" y="0.5" width="16" height="17" fill="#fff" stroke="#000"/><rect x="1" y="1" width="15" height="7" fill="#202020"/><text x="8.5" y="7.5" font-family="Liberation Sans" font-weight="bold" font-size="7.5" fill="#f0e020" text-anchor="middle">HFS</text><text x="8.5" y="16" font-family="Liberation Sans" font-size="8" text-anchor="middle">29</text></svg>
<svg style="left:1183px;top:1002px" width="16" height="16" viewBox="0 0 16 16" ><path d="M1 9l6-4 7 4-6 5z" fill="#a0a0c0" stroke="#404060" stroke-width=".8"/><path d="M4 3l3-2 3 2-3 3z" fill="#30a030"/><path d="M7 6v3" stroke="#30a030" stroke-width="2"/></svg>
<svg style="left:1200px;top:1002px" width="16" height="16" viewBox="0 0 16 16" ><rect x="0.5" y="0.5" width="15" height="15" rx="2" fill="#101010"/><rect x="1.5" y="8" width="13" height="6.5" fill="#10d010"/><path d="M2 10h12M2 12h12" stroke="#20a020" stroke-width=".6"/></svg>
<svg style="left:1226px;top:1005px" width="24" height="13" viewBox="0 0 24 13" ><path d="M4 0H9V9H11V12H0V9H4V4.5H1V2.5Q3 2 4 0Z" fill="#000080"/><path d="M4 0H9V9H11V12H0V9H4V4.5H1V2.5Q3 2 4 0Z" fill="#000080" transform="translate(12,0)"/></svg>
<div class="t" style="left:1251px;top:1002px;color:#000080;font-size:12px;font-weight:bold;line-height:11px;height:11px;-webkit-text-stroke:0.8px #000080;letter-spacing:0.5px">50</div>
<div class="t" style="left:1254px;top:1013px;color:#000080;font-size:8px;font-weight:bold;font-style:italic;line-height:9px;height:9px;-webkit-text-stroke:0.3px #000080;letter-spacing:1px">Пт</div>
<div class="raisedo" style="left:436px;top:267px;width:409px;height:460px;"></div>
<div style="left:438px;top:270px;width:404px;height:18px;background:linear-gradient(90deg,#808080,#c0c0c0)"></div>
<div class="t b" style="left:440px;top:273px;color:#d4d0c8">EWA net Server (Локальный компьютер) - свойства</div>
<div class="raised" style="left:806px;top:272px;width:16px;height:14px;"></div>
<svg style="left:806px;top:272px" width="16" height="14" viewBox="0 0 16 14" ><text x="8" y="11.5" font-family="Liberation Sans" font-weight="bold" font-size="12" text-anchor="middle">?</text></svg>
<div class="raised" style="left:824px;top:272px;width:16px;height:14px;"></div>
<svg style="left:824px;top:272px" width="16" height="14" viewBox="0 0 16 14" ><path d="M4.5 3.5l6 6M10.5 3.5l-6 6" stroke="#000" stroke-width="1.6"/></svg>
<div class="raisedo" style="left:444px;top:316px;width:392px;height:373px;"></div>
<div style="left:444px;top:296px;width:51px;height:22px;background:#d4d0c8;box-shadow:inset 1px 1px #fff,inset -1px 0 #404040,inset -2px 0 #808080"></div>
<div class="t" style="left:453px;top:299px;">Общие</div>
<div style="left:495px;top:298px;width:88px;height:18px;background:#d4d0c8;box-shadow:inset 1px 1px #fff,inset -1px 0 #404040,inset -2px 0 #808080"></div>
<div class="t" style="left:499px;top:302px;">Вход в систему</div>
<div style="left:583px;top:298px;width:96px;height:18px;background:#d4d0c8;box-shadow:inset 1px 1px #fff,inset -1px 0 #404040,inset -2px 0 #808080"></div>
<div class="t" style="left:587px;top:302px;">Восстановление</div>
<div style="left:679px;top:298px;width:80px;height:18px;background:#d4d0c8;box-shadow:inset 1px 1px #fff,inset -1px 0 #404040,inset -2px 0 #808080"></div>
<div class="t" style="left:683px;top:302px;">Зависимости</div>
<div class="t" style="left:459px;top:334px;">Имя службы:</div>
<div class="t" style="left:549px;top:334px;">EWA net Server</div>
<div class="t" style="left:459px;top:365px;"><span class="u">В</span>ыводимое имя:</div>
<div class="thin" style="left:550px;top:359px;width:266px;height:23px;background:#d4d0c8"></div>
<div class="t" style="left:552px;top:360px;">EWA net Server</div>
<div class="t" style="left:459px;top:394px;"><span class="u">О</span>писание:</div>
<div class="thin" style="left:550px;top:388px;width:266px;height:36px;background:#d4d0c8"></div>
<div class="raised" style="left:798px;top:389px;width:17px;height:16px;"></div>
<svg style="left:798px;top:389px" width="17" height="16" viewBox="0 0 17 16" ><path d="M8.5 6l-3 3h6z" fill="#808080"/><path d="M11.5 9.5l-3-3" stroke="#fff" stroke-width=".8" transform="translate(1,1)"/></svg>
<div class="raised" style="left:798px;top:406px;width:17px;height:16px;"></div>
<svg style="left:798px;top:406px" width="17" height="16" viewBox="0 0 17 16" ><path d="M8.5 10l-3-3h6z" fill="#808080"/></svg>
<div class="t" style="left:459px;top:436px;"><span class="u">И</span>сполняемый файл:</div>
<div class="thin" style="left:459px;top:451px;width:357px;height:22px;background:#d4d0c8"></div>
<div class="t" style="left:461px;top:453px;">C:\Program Files\EWA net\server\bin\target.exe</div>
<div class="raisedo" style="left:459px;top:565px;width:83px;height:23px;"></div>
<div class="t" style="left:459px;top:570px;width:83px;text-align:center;"><span class="u">П</span>уск</div>
<div class="raisedo" style="left:549px;top:565px;width:82px;height:23px;"></div>
<div class="t" style="left:549px;top:570px;width:82px;text-align:center;color:#808080;text-shadow:1px 1px #fff"><span class="u">С</span>топ</div>
<div class="raisedo" style="left:639px;top:565px;width:85px;height:23px;"></div>
<div class="t" style="left:639px;top:570px;width:85px;text-align:center;color:#808080;text-shadow:1px 1px #fff">Пау<span class="u">з</span>а</div>
<div class="raisedo" style="left:732px;top:565px;width:83px;height:23px;"></div>
<div class="t" style="left:732px;top:570px;width:83px;text-align:center;color:#808080;text-shadow:1px 1px #fff">Про<span class="u">д</span>олжить</div>
<div class="t" style="left:459px;top:600px;">Можно указать параметры запуска, применяемые при запуске</div>
<div class="t" style="left:459px;top:614px;">службы из этого диалога.</div>
<div class="t dis" style="left:459px;top:643px;">Параметры <span class="u">з</span>апуска:</div>
<div class="thin" style="left:571px;top:638px;width:245px;height:22px;background:#d4d0c8"></div>
<div class="raisedo" style="left:599px;top:695px;width:75px;height:23px;"></div>
<div class="t" style="left:599px;top:700px;width:75px;text-align:center">OK</div>
<div class="raisedo" style="left:680px;top:695px;width:75px;height:23px;"></div>
<div class="t" style="left:680px;top:700px;width:75px;text-align:center">Отмена</div>
<div class="raisedo" style="left:760px;top:695px;width:75px;height:23px;"></div>
<div class="t" style="left:760px;top:700px;width:75px;text-align:center;color:#808080;text-shadow:1px 1px #fff">При<span class="u">м</span>енить</div>
<div class="raisedo" style="left:281px;top:458px;width:725px;height:119px;"></div>
<svg style="left:294px;top:490px" width="32" height="32" viewBox="0 0 32 32" ><defs><linearGradient id="wg" x1="0" y1="0" x2="0.3" y2="1"><stop offset="0" stop-color="#fff8a0"/><stop offset="0.5" stop-color="#f8e010"/><stop offset="1" stop-color="#e8c000"/></linearGradient></defs><path d="M17 4L31.5 30.5H5Z" fill="#404040" opacity=".6" transform="translate(0.5,1)"/><path d="M15.2 2.8Q16 1.5 16.8 2.8L30 27.5Q30.6 29 29 29H3Q1.4 29 2 27.5Z" fill="url(#wg)" stroke="#303030" stroke-width="1"/><path d="M16.8 2.8L30 27.5Q30.6 29 29 29H3" fill="none" stroke="#202020" stroke-width="1.8"/><path d="M13.8 10.5Q16 9 18.2 10.5L17 21h-2z" fill="#000"/><circle cx="16" cy="24.3" r="2.1" fill="#000"/></svg>
<div style="left:284px;top:461px;width:720px;height:18px;background:linear-gradient(90deg,#0a246a,#a6caf0)"></div>
<div class="t b" style="left:286px;top:464px;color:#fff">Службы</div>
<div class="raised" style="left:985px;top:463px;width:16px;height:14px;"></div>
<svg style="left:985px;top:463px" width="16" height="14" viewBox="0 0 16 14" ><path d="M4.5 3.5l6 6M10.5 3.5l-6 6" stroke="#000" stroke-width="1.6"/></svg>
<div class="t" style="left:345px;top:496px;">Служба "EWA net Server" на "Локальный компьютер" была запущена и затем остановлена. Некоторые службы автоматически</div>
<div class="t" style="left:345px;top:509px;">останавливаются, если им нечего делать, например, служба журналов и оповещений производительности.</div>
<div style="left:607px;top:540px;width:76px;height:24px;background:#000;box-shadow:inset -2px -2px #404040,inset 2px 2px #fff,inset -3px -3px #808080"></div>
<div class="raisedo" style="left:608px;top:541px;width:74px;height:22px;"></div>
<div style="left:611px;top:544px;width:68px;height:16px;border:1px dotted #000"></div>
<div class="t" style="left:607px;top:545px;width:76px;text-align:center">OK</div>
</body></html>
